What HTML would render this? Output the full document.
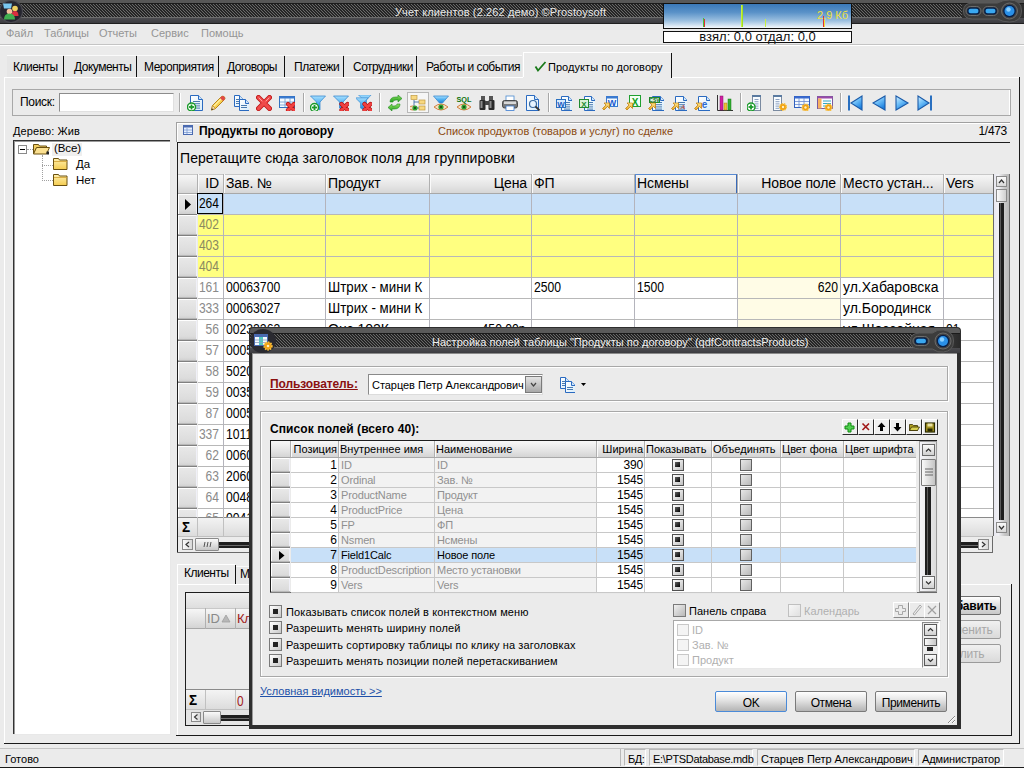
<!DOCTYPE html><html><head><meta charset='utf-8'><style>
html,body{margin:0;padding:0;width:1024px;height:768px;overflow:hidden;background:#ebebeb;font-family:"Liberation Sans",sans-serif;}
.a{position:absolute;white-space:nowrap;}
svg{position:absolute;}
</style></head><body>
<div class=a style='left:0px;top:0px;width:1024px;height:3px;background:#585858'></div>
<div class=a style='left:0px;top:3px;width:1024px;height:1px;background:#1c1c1c'></div>
<svg width='0' height='0' style='position:absolute'><defs><pattern id='stp' width='3' height='3' patternUnits='userSpaceOnUse'><rect width='3' height='3' fill='#262626'/><rect x='0' y='0' width='1' height='1' fill='#6a6a6a'/><rect x='1' y='1' width='1' height='1' fill='#6a6a6a'/><rect x='2' y='2' width='1' height='1' fill='#6a6a6a'/></pattern></defs></svg>
<svg style='left:0px;top:4px' width='1024' height='14' shape-rendering='crispEdges'><rect width='1024' height='14' fill='url(#stp)'/></svg>
<div class=a style='left:0px;top:17px;width:1024px;height:1px;background:#6e6e6e'></div>
<div class=a style='left:0px;top:18px;width:1024px;height:5px;background:linear-gradient(#4c4c50,#3c3c40)'></div>
<div class=a style='left:0px;top:23px;width:1024px;height:1px;background:#202020'></div>
<svg style='left:0;top:0' width='26' height='24' viewBox='0 0 26 24'>
<ellipse cx='11' cy='11.5' rx='11.5' ry='11' fill='#262630' stroke='#4a4a50' stroke-width='1.2'/>
<path d='M3 3.5 h9 l-1 5 h-7z' fill='#7ac8f0'/>
<circle cx='15' cy='8.5' r='2.8' fill='#f0d060'/><path d='M11.5 16 q0 -5 3.5 -5 q3.5 0 3.5 5z' fill='#d83040'/>
<circle cx='9.5' cy='11.5' r='2.8' fill='#f8c0a0'/><path d='M4 19.5 q0 -6 5.5 -6 q5.5 0 5.5 6z' fill='#40b050'/>
</svg>
<div class=a style='left:395px;top:6.69px;font-size:11px;line-height:11px;color:#e8e8e8;letter-spacing:0.12px;'>Учет клиентов (2.262 демо) ©Prostoysoft</div>
<div class=a style='left:962px;top:4px;width:62px;height:14px;background:#2e2e2e'></div>
<svg style='left:962px;top:0px' width='62' height='24' viewBox='0 0 62 24'>
<path d='M1.5 11 q0 -8 9 -8 h25 q5 -3 12 -3 q12 0 12 11 q0 11 -12 11 q-7 0 -12 -3 h-25 q-9 0 -9 -8z' fill='#3c3c3c' stroke='#5a5a5a' stroke-width='1'/>
<rect x='4' y='6.5' width='15' height='9' rx='4.5' fill='#3a3a3a' stroke='#7a7a7a' stroke-width='.8'/>
<rect x='5.2' y='7.5' width='12.6' height='7' rx='3.5' fill='#06204a'/><rect x='6.5' y='8.8' width='10' height='4.4' rx='2.2' fill='#3aa8f0'/>
<rect x='21' y='6.5' width='15' height='9' rx='4.5' fill='#3a3a3a' stroke='#7a7a7a' stroke-width='.8'/>
<rect x='22.2' y='7.5' width='12.6' height='7' rx='3.5' fill='#06204a'/><rect x='23.5' y='8.8' width='10' height='4.4' rx='2.2' fill='#3aa8f0'/>
<circle cx='47.5' cy='11' r='8' fill='#444' stroke='#6a6a6a' stroke-width='1'/>
<circle cx='47.5' cy='11' r='6.3' fill='#06204a'/><circle cx='47.5' cy='11' r='5' fill='#2a90e8'/><circle cx='46.5' cy='9.5' r='2.2' fill='#8ad0ff'/>
</svg>
<div class=a style='left:0px;top:24px;width:1024px;height:20px;background:#ebebeb'></div>
<div class=a style='left:6px;top:27.69px;font-size:11px;line-height:11px;color:#959595;'>Файл</div>
<div class=a style='left:44px;top:27.69px;font-size:11px;line-height:11px;color:#959595;'>Таблицы</div>
<div class=a style='left:99px;top:27.69px;font-size:11px;line-height:11px;color:#959595;'>Отчеты</div>
<div class=a style='left:151px;top:27.69px;font-size:11px;line-height:11px;color:#959595;'>Сервис</div>
<div class=a style='left:201px;top:27.69px;font-size:11px;line-height:11px;color:#959595;'>Помощь</div>
<div class=a style='left:0px;top:44px;width:1024px;height:1px;background:#c4c4c4'></div>
<div class=a style='left:0px;top:45px;width:1024px;height:1px;background:#ffffff'></div>
<div class=a style='left:663px;top:3px;width:189px;height:26px;background:linear-gradient(#3a78b8,#5a92c8 35%,#9cc0e0 70%,#f4f8fc);border:1px solid #111;box-sizing:border-box'></div>
<div class=a style='left:741px;top:5px;width:1px;height:22px;background:#c8f040'></div>
<div class=a style='left:742px;top:5px;width:1px;height:22px;background:#a0e020'></div>
<div class=a style='left:703px;top:18px;width:1px;height:9px;background:#40c040'></div>
<div class=a style='left:704px;top:19px;width:1px;height:8px;background:#e03030'></div>
<div class=a style='left:765px;top:19px;width:1px;height:8px;background:#c8f040'></div>
<div class=a style='left:823px;top:16px;width:1px;height:11px;background:#e03030'></div>
<div class=a style='left:824px;top:20px;width:1px;height:7px;background:#f0e040'></div>
<div class=a style='left:817px;top:9.69px;font-size:11px;line-height:11px;color:#f0e040;'>2,9 Кб</div>
<div class=a style='left:663px;top:31px;width:189px;height:12px;background:#fff;border:1px solid #111;box-sizing:border-box'></div>
<div class=a style='left:663px;width:189px;text-align:center;top:30.00px;font-size:13px;line-height:13px;color:#111;'>взял: 0,0 отдал: 0,0</div>
<div class=a style='left:4px;top:77px;width:1016px;height:667px;background:#ebebeb'></div>
<div class=a style='left:4px;top:77px;width:1016px;height:1px;background:#ffffff'></div>
<div class=a style='left:4px;top:77px;width:1px;height:666px;background:#ffffff'></div>
<div class=a style='left:1019px;top:77px;width:1px;height:667px;background:#1a1a1a'></div>
<div class=a style='left:4px;top:743px;width:1016px;height:1px;background:#1a1a1a'></div>
<div class=a style='left:7px;top:55px;width:56px;height:22px;background:#e6e6e6'></div>
<div class=a style='left:7px;top:55px;width:56px;height:1px;background:#fafafa'></div>
<div class=a style='left:63px;top:56px;width:1px;height:21px;background:#111'></div>
<div class=a style='left:13px;top:60.84px;font-size:12px;line-height:12px;color:#000;letter-spacing:-0.5px;'>Клиенты</div>
<div class=a style='left:64px;top:55px;width:72px;height:22px;background:#e6e6e6'></div>
<div class=a style='left:64px;top:55px;width:72px;height:1px;background:#fafafa'></div>
<div class=a style='left:136px;top:56px;width:1px;height:21px;background:#111'></div>
<div class=a style='left:74px;top:60.84px;font-size:12px;line-height:12px;color:#000;letter-spacing:-0.5px;'>Документы</div>
<div class=a style='left:137px;top:55px;width:81px;height:22px;background:#e6e6e6'></div>
<div class=a style='left:137px;top:55px;width:81px;height:1px;background:#fafafa'></div>
<div class=a style='left:218px;top:56px;width:1px;height:21px;background:#111'></div>
<div class=a style='left:144px;top:60.84px;font-size:12px;line-height:12px;color:#000;letter-spacing:-0.5px;'>Мероприятия</div>
<div class=a style='left:219px;top:55px;width:65px;height:22px;background:#e6e6e6'></div>
<div class=a style='left:219px;top:55px;width:65px;height:1px;background:#fafafa'></div>
<div class=a style='left:284px;top:56px;width:1px;height:21px;background:#111'></div>
<div class=a style='left:227px;top:60.84px;font-size:12px;line-height:12px;color:#000;letter-spacing:-0.5px;'>Договоры</div>
<div class=a style='left:285px;top:55px;width:58px;height:22px;background:#e6e6e6'></div>
<div class=a style='left:285px;top:55px;width:58px;height:1px;background:#fafafa'></div>
<div class=a style='left:343px;top:56px;width:1px;height:21px;background:#111'></div>
<div class=a style='left:294px;top:60.84px;font-size:12px;line-height:12px;color:#000;letter-spacing:-0.5px;'>Платежи</div>
<div class=a style='left:344px;top:55px;width:72px;height:22px;background:#e6e6e6'></div>
<div class=a style='left:344px;top:55px;width:72px;height:1px;background:#fafafa'></div>
<div class=a style='left:416px;top:56px;width:1px;height:21px;background:#111'></div>
<div class=a style='left:353px;top:60.84px;font-size:12px;line-height:12px;color:#000;letter-spacing:-0.5px;'>Сотрудники</div>
<div class=a style='left:417px;top:55px;width:105px;height:22px;background:#e6e6e6'></div>
<div class=a style='left:417px;top:55px;width:105px;height:1px;background:#fafafa'></div>
<div class=a style='left:426px;top:60.84px;font-size:12px;line-height:12px;color:#000;letter-spacing:-0.5px;'>Работы и события</div>
<div class=a style='left:523px;top:52px;width:148px;height:26px;background:#ebebeb'></div>
<div class=a style='left:523px;top:52px;width:148px;height:1px;background:#ffffff'></div>
<div class=a style='left:523px;top:52px;width:1px;height:25px;background:#ffffff'></div>
<div class=a style='left:671px;top:53px;width:1px;height:25px;background:#111'></div>
<svg style='left:534px;top:61px' width='13' height='11' viewBox='0 0 13 11'><path d='M1.5 5.5 L4 9.5 L11.5 1' stroke='#1a7a1a' stroke-width='1.8' fill='none'/></svg>
<div class=a style='left:548px;top:61.69px;font-size:11px;line-height:11px;color:#000;letter-spacing:0.05px;'>Продукты по договору</div>
<div class=a style='left:12px;top:89px;width:998px;height:27px;background:#ebebeb;border:1px solid #b4b4b4;border-right-color:#fff;border-bottom-color:#fff;box-sizing:border-box'></div>
<div class=a style='left:12px;top:89px;width:998px;height:1px;background:#a8a8a8'></div>
<div class=a style='left:12px;top:115px;width:998px;height:1px;background:#a8a8a8'></div>
<div class=a style='left:12px;top:89px;width:1px;height:27px;background:#a8a8a8'></div>
<div class=a style='left:1010px;top:89px;width:1px;height:27px;background:#a8a8a8'></div>
<div class=a style='left:20px;top:95.84px;font-size:12px;line-height:12px;color:#000;letter-spacing:-0.3px;'>Поиск:</div>
<div class=a style='left:59px;top:93px;width:115px;height:19px;background:#fff;border:1px solid #8c8c8c;border-right-color:#e0e0e0;border-bottom-color:#e0e0e0;box-sizing:border-box'></div>
<div class=a style='left:179px;top:93px;width:1px;height:19px;background:#a8a8a8'></div>
<div class=a style='left:180px;top:93px;width:1px;height:19px;background:#ffffff'></div>
<div class=a style='left:303px;top:93px;width:1px;height:19px;background:#a8a8a8'></div>
<div class=a style='left:304px;top:93px;width:1px;height:19px;background:#ffffff'></div>
<div class=a style='left:379px;top:93px;width:1px;height:19px;background:#a8a8a8'></div>
<div class=a style='left:380px;top:93px;width:1px;height:19px;background:#ffffff'></div>
<div class=a style='left:548px;top:93px;width:1px;height:19px;background:#a8a8a8'></div>
<div class=a style='left:549px;top:93px;width:1px;height:19px;background:#ffffff'></div>
<div class=a style='left:740px;top:93px;width:1px;height:19px;background:#a8a8a8'></div>
<div class=a style='left:741px;top:93px;width:1px;height:19px;background:#ffffff'></div>
<div class=a style='left:840px;top:93px;width:1px;height:19px;background:#a8a8a8'></div>
<div class=a style='left:841px;top:93px;width:1px;height:19px;background:#ffffff'></div>
<div class=a style='left:407px;top:92px;width:22px;height:21px;background:#f6f6f6;border:1px solid #b8b8b8;box-sizing:border-box'></div>
<svg width='0' height='0' style='position:absolute'><defs>
<linearGradient id='gBlue' x1='0' y1='0' x2='0' y2='1'><stop offset='0' stop-color='#a8e0ff'/><stop offset='.5' stop-color='#50b0f0'/><stop offset='1' stop-color='#1a80d8'/></linearGradient>
<linearGradient id='gBlueH' x1='0' y1='0' x2='.6' y2='1'><stop offset='0' stop-color='#d8f0ff'/><stop offset='.5' stop-color='#70c0f8'/><stop offset='1' stop-color='#1a80e0'/></linearGradient>
<linearGradient id='gRed' x1='0' y1='0' x2='0' y2='1'><stop offset='0' stop-color='#ff8080'/><stop offset='1' stop-color='#d01010'/></linearGradient>
<linearGradient id='gGreen' x1='0' y1='0' x2='0' y2='1'><stop offset='0' stop-color='#90e060'/><stop offset='1' stop-color='#20a020'/></linearGradient>
<linearGradient id='gYel' x1='0' y1='0' x2='0' y2='1'><stop offset='0' stop-color='#ffe890'/><stop offset='1' stop-color='#e0a020'/></linearGradient>
<linearGradient id='gDoc' x1='0' y1='0' x2='1' y2='1'><stop offset='0' stop-color='#ffffff'/><stop offset='1' stop-color='#d8ecfa'/></linearGradient>
</defs></svg>
<svg style='left:187px;top:95px' width='16' height='16' viewBox='0 0 16 16'><path d='M3.5 0.5 h8 l4 4 v11 h-12 z' fill='url(#gDoc)' stroke='#2a6ac0'/><path d='M11.5 0.5 v4 h4' fill='#cfe6fa' stroke='#2a6ac0'/><rect x='6' y='6.0' width='7' height='1' fill='#4a7ab0'/><rect x='6' y='8.2' width='7' height='1' fill='#4a7ab0'/><rect x='6' y='10.4' width='7' height='1' fill='#4a7ab0'/><rect x='6' y='12.6' width='7' height='1' fill='#4a7ab0'/><circle cx='4.5' cy='12' r='4' fill='#fff' stroke='#1a9a2a' stroke-width='1.5'/><rect x='2.0' y='11.1' width='5' height='1.8' fill='#1a9a2a'/><rect x='3.6' y='9.5' width='1.8' height='5' fill='#1a9a2a'/></svg>
<svg style='left:210px;top:95px' width='16' height='16' viewBox='0 0 16 16'><path d='M1.5 15 L2.5 10.5 L11.5 1.5 Q13 0.5 14.5 2 Q15.5 3.5 14.5 4.5 L5.5 13.5 z' fill='#f8d050' stroke='#b07a10' stroke-width='.9'/><path d='M4 11 L12.5 2.5' stroke='#fff0a0' stroke-width='1.2'/><path d='M11.5 1.5 Q13 0.5 14.5 2 Q15.5 3.5 14.5 4.5 L13 6 L10 3z' fill='#e04848'/><path d='M1.5 15 L2.5 10.5 L5.5 13.5z' fill='#f4dcb0' stroke='#b07a10' stroke-width='.6'/><path d='M1.3 15.2 l.6 -2 l1.4 1.4z' fill='#333'/></svg>
<svg style='left:233px;top:95px' width='16' height='16' viewBox='0 0 16 16'><path d='M1.5 0.5 h5 l4 4 v7 h-9 z' fill='url(#gDoc)' stroke='#2a6ac0'/><path d='M6.5 0.5 v4 h4' fill='#cfe6fa' stroke='#2a6ac0'/><rect x='3' y='4' width='4' height='1' fill='#4a7ab0'/><rect x='3' y='6' width='4' height='1' fill='#4a7ab0'/><rect x='3' y='8' width='4' height='1' fill='#4a7ab0'/><path d='M6.5 4.5 h6 l4 4 v7 h-10 z' fill='url(#gDoc)' stroke='#2a6ac0'/><path d='M12.5 4.5 v4 h4' fill='#cfe6fa' stroke='#2a6ac0'/><rect x='8' y='10' width='6' height='1' fill='#4a7ab0'/><rect x='8' y='12' width='6' height='1' fill='#4a7ab0'/></svg>
<svg style='left:256px;top:95px' width='16' height='16' viewBox='0 0 16 16'><path d='M2.5 2.5 L13.5 13.5 M13.5 2.5 L2.5 13.5' stroke='#c01818' stroke-width='5' stroke-linecap='round'/><path d='M2.5 2.5 L13.5 13.5 M13.5 2.5 L2.5 13.5' stroke='#f04a4a' stroke-width='3.2' stroke-linecap='round'/><path d='M3 3 L6 6 M13 3 L10 6' stroke='#ffa0a0' stroke-width='1' stroke-linecap='round'/></svg>
<svg style='left:279px;top:95px' width='16' height='16' viewBox='0 0 16 16'><rect x='.5' y='1.5' width='15' height='11' fill='#f4faff' stroke='#3070c0'/><rect x='.5' y='1.5' width='15' height='2' fill='#3a7ad0'/><path d='M1 7 h14 M1 10 h14 M6 3 v9 M11 3 v9' stroke='#6a9ad0' stroke-width='.8'/><path d='M9 9 L15 15 M15 9 L9 15' stroke='#b01010' stroke-width='4.2' stroke-linecap='round'/><path d='M9 9 L15 15 M15 9 L9 15' stroke='#f04040' stroke-width='3' stroke-linecap='round'/></svg>
<svg style='left:310px;top:95px' width='16' height='16' viewBox='0 0 16 16'><path d='M0.5 1 h15 l-5.5 6 v8 l-3.5 -2 v-6 z' fill='url(#gBlue)' stroke='#3a8ad0' stroke-width='.8'/><circle cx='4.5' cy='12.5' r='4' fill='#fff' stroke='#1a9a2a' stroke-width='1.5'/><rect x='2.0' y='11.6' width='5' height='1.8' fill='#1a9a2a'/><rect x='3.6' y='10.0' width='1.8' height='5' fill='#1a9a2a'/></svg>
<svg style='left:333px;top:95px' width='16' height='16' viewBox='0 0 16 16'><path d='M0.5 1 h15 l-5.5 6 v8 l-3.5 -2 v-6 z' fill='url(#gBlue)' stroke='#3a8ad0' stroke-width='.8'/><path d='M8.5 9 L14.5 15 M14.5 9 L8.5 15' stroke='#b01010' stroke-width='4.2' stroke-linecap='round'/><path d='M8.5 9 L14.5 15 M14.5 9 L8.5 15' stroke='#f04040' stroke-width='3' stroke-linecap='round'/></svg>
<svg style='left:356px;top:95px' width='16' height='16' viewBox='0 0 16 16'><g transform='translate(2,-1) scale(.85)'><path d='M0.5 1 h15 l-5.5 6 v8 l-3.5 -2 v-6 z' fill='url(#gBlue)' stroke='#3a8ad0' stroke-width='.8'/></g><g transform='translate(-1,2) scale(.85)'><path d='M0.5 1 h15 l-5.5 6 v8 l-3.5 -2 v-6 z' fill='url(#gBlue)' stroke='#3a8ad0' stroke-width='.8'/></g><path d='M8.5 9 L14.5 15 M14.5 9 L8.5 15' stroke='#b01010' stroke-width='4.2' stroke-linecap='round'/><path d='M8.5 9 L14.5 15 M14.5 9 L8.5 15' stroke='#f04040' stroke-width='3' stroke-linecap='round'/></svg>
<svg style='left:387px;top:95px' width='16' height='16' viewBox='0 0 16 16'><path d='M3 7 Q3 2 9 2 L11 2 L11 0 L15 3.5 L11 7 L11 5 L9 5 Q6 5 6 7 z' fill='url(#gGreen)' stroke='#208a20' stroke-width='.6'/><path d='M13 9 Q13 14 7 14 L5 14 L5 16 L1 12.5 L5 9 L5 11 L7 11 Q10 11 10 9 z' fill='url(#gGreen)' stroke='#208a20' stroke-width='.6'/></svg>
<svg style='left:410px;top:95px' width='16' height='16' viewBox='0 0 16 16'><rect x='1' y='0.5' width='6' height='4' fill='#f8d880' stroke='#c09a40' stroke-width='.7'/><rect x='9' y='5' width='6' height='4' fill='#f8d880' stroke='#c09a40' stroke-width='.7'/><rect x='9' y='11' width='6' height='4' fill='#f8d880' stroke='#c09a40' stroke-width='.7'/><path d='M4 5 v8 h5 M4 7 h5' stroke='#3060a0' stroke-width='.8' fill='none'/><path d='M-2 13 q4.5 -4 9 0 q-4.5 4 -9 0z' fill='#f8e0c0' stroke='#d08040' stroke-width='1'/><circle cx='5' cy='13' r='2.6' fill='#30a030'/><circle cx='5' cy='13' r='1' fill='#104010'/></svg>
<svg style='left:433px;top:95px' width='16' height='16' viewBox='0 0 16 16'><path d='M.5 1 h15 l-6 7 h-3 z' fill='url(#gBlue)' stroke='#3a8ad0' stroke-width='.8'/><path d='M1 12 q7 -6 14 0 q-7 6 -14 0z' fill='#f8e0c0' stroke='#d08040' stroke-width='1'/><circle cx='8' cy='12' r='2.6' fill='#30a030'/><circle cx='8' cy='12' r='1' fill='#104010'/></svg>
<svg style='left:456px;top:95px' width='16' height='16' viewBox='0 0 16 16'><text x='8' y='7' font-family='Liberation Sans' font-weight='bold' font-size='8' fill='#0a700a' text-anchor='middle' textLength='15' lengthAdjust='spacingAndGlyphs'>SQL</text><path d='M1 12 q7 -6 14 0 q-7 6 -14 0z' fill='#f8e0c0' stroke='#d08040' stroke-width='1'/><circle cx='8' cy='12' r='2.6' fill='#30a030'/><circle cx='8' cy='12' r='1' fill='#104010'/></svg>
<svg style='left:479px;top:95px' width='16' height='16' viewBox='0 0 16 16'><rect x='2' y='1' width='4' height='4' fill='#555'/><rect x='10' y='1' width='4' height='4' fill='#555'/><rect x='0.5' y='5' width='6' height='10' rx='1' fill='#2a2a2a'/><rect x='9.5' y='5' width='6' height='10' rx='1' fill='#2a2a2a'/><rect x='6' y='6' width='4' height='4' fill='#444'/><rect x='1.5' y='6' width='2' height='7' fill='#8a8a8a'/><rect x='10.5' y='6' width='2' height='7' fill='#8a8a8a'/></svg>
<svg style='left:502px;top:95px' width='16' height='16' viewBox='0 0 16 16'><rect x='4' y='1' width='8' height='5' fill='#fff' stroke='#4a8ad0' stroke-width='.8'/><rect x='.5' y='5.5' width='15' height='7.5' rx='2' fill='#7a7a7a' stroke='#333' stroke-width='.8'/><rect x='2' y='6.5' width='12' height='2.5' fill='#d8d8d8'/><rect x='4' y='11' width='8' height='4.5' fill='#fff' stroke='#3a7ad0' stroke-width='.8'/></svg>
<svg style='left:525px;top:95px' width='16' height='16' viewBox='0 0 16 16'><path d='M1.5 0.5 h8 l4 4 v11 h-12 z' fill='url(#gDoc)' stroke='#2a6ac0'/><path d='M9.5 0.5 v4 h4' fill='#cfe6fa' stroke='#2a6ac0'/><circle cx='8' cy='9' r='3.5' fill='#e8f4ff' stroke='#3a6aa0' stroke-width='1.2'/><path d='M10.5 11.5 L14.5 15.5' stroke='#333' stroke-width='1.8'/></svg>
<svg style='left:556px;top:95px' width='16' height='16' viewBox='0 0 16 16'><path d='M5.5 1.5 h7 l4 4 v10 h-11 z' fill='url(#gDoc)' stroke='#2a6ac0'/><path d='M12.5 1.5 v4 h4' fill='#cfe6fa' stroke='#2a6ac0'/><rect x='8' y='7.0' width='6' height='1' fill='#4a7ab0'/><rect x='8' y='9.2' width='6' height='1' fill='#4a7ab0'/><rect x='8' y='11.4' width='6' height='1' fill='#4a7ab0'/><rect x='8' y='13.6' width='6' height='1' fill='#4a7ab0'/><rect x='0.5' y='4.5' width='9' height='8' fill='#d8ecff' stroke='#2a70c0'/><text x='5' y='11.5' font-family='Liberation Sans' font-weight='bold' font-size='8' fill='#1a5ac0' text-anchor='middle'>W</text></svg>
<svg style='left:579px;top:95px' width='16' height='16' viewBox='0 0 16 16'><path d='M5.5 1.5 h7 l4 4 v10 h-11 z' fill='url(#gDoc)' stroke='#2a6ac0'/><path d='M12.5 1.5 v4 h4' fill='#cfe6fa' stroke='#2a6ac0'/><rect x='8' y='7.0' width='6' height='1' fill='#4a7ab0'/><rect x='8' y='9.2' width='6' height='1' fill='#4a7ab0'/><rect x='8' y='11.4' width='6' height='1' fill='#4a7ab0'/><rect x='8' y='13.6' width='6' height='1' fill='#4a7ab0'/><rect x='0.5' y='4.5' width='9' height='8' fill='#d8f0d8' stroke='#208a30'/><text x='5' y='11.5' font-family='Liberation Sans' font-weight='bold' font-size='8' fill='#208a30' text-anchor='middle'>X</text></svg>
<svg style='left:602px;top:95px' width='16' height='16' viewBox='0 0 16 16'><rect x='4.5' y='1.5' width='11' height='10' fill='#f4faff' stroke='#3a7ad0'/><rect x='4.5' y='1.5' width='11' height='2' fill='#3a7ad0'/><text x='10' y='10.5' font-family='Liberation Sans' font-weight='bold' font-size='9' fill='#1a5ad0' text-anchor='middle'>W</text><path d='M0.5 13.5 L4 10 L2 8 H7.5 V13.5 L5.5 11.5 L2 15 z' fill='url(#gYel)' stroke='#c07800' stroke-width='.7'/></svg>
<svg style='left:625px;top:95px' width='16' height='16' viewBox='0 0 16 16'><rect x='4.5' y='0.5' width='11' height='11' fill='#f4fff4' stroke='#20a030'/><text x='10' y='10.5' font-family='Liberation Sans' font-weight='bold' font-size='10' fill='#10a020' text-anchor='middle'>X</text><path d='M0.5 13.5 L4 10 L2 8 H7.5 V13.5 L5.5 11.5 L2 15 z' fill='url(#gYel)' stroke='#c07800' stroke-width='.7'/></svg>
<svg style='left:648px;top:95px' width='16' height='16' viewBox='0 0 16 16'><path d='M4.5 1.5 h8 l4 4 v10 h-12 z' fill='url(#gDoc)' stroke='#2a6ac0'/><path d='M12.5 1.5 v4 h4' fill='#cfe6fa' stroke='#2a6ac0'/><rect x='7' y='7.0' width='7' height='1' fill='#4a7ab0'/><rect x='7' y='9.2' width='7' height='1' fill='#4a7ab0'/><rect x='7' y='11.4' width='7' height='1' fill='#4a7ab0'/><rect x='7' y='13.6' width='7' height='1' fill='#4a7ab0'/><rect x='1.5' y='2.5' width='10' height='5' fill='#e0f4e0' stroke='#208a30'/><text x='6.5' y='7' font-family='Liberation Sans' font-weight='bold' font-size='5' fill='#106a20' text-anchor='middle'>CSV</text><path d='M0.5 13.5 L4 10 L2 8 H7.5 V13.5 L5.5 11.5 L2 15 z' fill='url(#gYel)' stroke='#c07800' stroke-width='.7'/></svg>
<svg style='left:671px;top:95px' width='16' height='16' viewBox='0 0 16 16'><path d='M4.5 1.5 h8 l4 4 v10 h-12 z' fill='url(#gDoc)' stroke='#2a6ac0'/><path d='M12.5 1.5 v4 h4' fill='#cfe6fa' stroke='#2a6ac0'/><rect x='7' y='7.0' width='7' height='1' fill='#4a7ab0'/><rect x='7' y='9.2' width='7' height='1' fill='#4a7ab0'/><rect x='7' y='11.4' width='7' height='1' fill='#4a7ab0'/><rect x='7' y='13.6' width='7' height='1' fill='#4a7ab0'/><text x='12' y='14' font-family='Liberation Serif' font-style='italic' font-size='7' fill='#c03020' text-anchor='middle'>A</text><path d='M0.5 13.5 L4 10 L2 8 H7.5 V13.5 L5.5 11.5 L2 15 z' fill='url(#gYel)' stroke='#c07800' stroke-width='.7'/></svg>
<svg style='left:694px;top:95px' width='16' height='16' viewBox='0 0 16 16'><path d='M4.5 1.5 h8 l4 4 v10 h-12 z' fill='url(#gDoc)' stroke='#2a6ac0'/><path d='M12.5 1.5 v4 h4' fill='#cfe6fa' stroke='#2a6ac0'/><text x='10.5' y='13' font-family='Liberation Sans' font-weight='bold' font-size='10' fill='#2a6ad0' text-anchor='middle'>e</text><path d='M0.5 13.5 L4 10 L2 8 H7.5 V13.5 L5.5 11.5 L2 15 z' fill='url(#gYel)' stroke='#c07800' stroke-width='.7'/></svg>
<svg style='left:717px;top:95px' width='16' height='16' viewBox='0 0 16 16'><path d='M.5 0 v15.5 h15.5' stroke='#333' stroke-width='1' fill='none'/><rect x='3' y='1' width='3' height='14' fill='#d020a0' stroke='#8a1070' stroke-width='.5'/><rect x='7' y='8' width='3' height='7' fill='#f0c030' stroke='#a08020' stroke-width='.5'/><rect x='11' y='4' width='3' height='11' fill='#30b030' stroke='#1a7a1a' stroke-width='.5'/></svg>
<svg style='left:747px;top:95px' width='16' height='16' viewBox='0 0 16 16'><rect x='5.5' y='.5' width='8' height='15' fill='#f8fcff' stroke='#7a8aa0'/><rect x='5' y='0' width='9' height='2' fill='#5a7aa0'/><rect x='7.5' y='4.0' width='4' height='1' fill='#8aa0c0'/><rect x='7.5' y='6.2' width='4' height='1' fill='#8aa0c0'/><rect x='7.5' y='8.4' width='4' height='1' fill='#8aa0c0'/><rect x='7.5' y='10.6' width='4' height='1' fill='#8aa0c0'/><rect x='7.5' y='12.8' width='4' height='1' fill='#8aa0c0'/><circle cx='4' cy='12' r='4' fill='#fff' stroke='#1a9a2a' stroke-width='1.5'/><rect x='1.5' y='11.1' width='5' height='1.8' fill='#1a9a2a'/><rect x='3.1' y='9.5' width='1.8' height='5' fill='#1a9a2a'/></svg>
<svg style='left:771px;top:95px' width='16' height='16' viewBox='0 0 16 16'><rect x='2.5' y='.5' width='8' height='15' fill='#f8fcff' stroke='#7a8aa0'/><rect x='2' y='0' width='9' height='2' fill='#5a7aa0'/><rect x='4.5' y='4.0' width='4' height='1' fill='#8aa0c0'/><rect x='4.5' y='6.2' width='4' height='1' fill='#8aa0c0'/><rect x='4.5' y='8.4' width='4' height='1' fill='#8aa0c0'/><rect x='4.5' y='10.6' width='4' height='1' fill='#8aa0c0'/><rect x='4.5' y='12.8' width='4' height='1' fill='#8aa0c0'/><circle cx='12' cy='12' r='3.3' fill='#f0a010' stroke='#f8c040' stroke-width='1.6' stroke-dasharray='1.3 1'/><circle cx='12' cy='12' r='1.2' fill='#fff0c0'/></svg>
<svg style='left:794px;top:95px' width='16' height='16' viewBox='0 0 16 16'><rect x='.5' y='1.5' width='15' height='11' fill='#f4faff' stroke='#3060c0'/><rect x='.5' y='1.5' width='15' height='2' fill='#3a6ad0'/><path d='M1 6.5 h14 M1 9.5 h14 M5 3 v9 M10 3 v9' stroke='#6a8ad0' stroke-width='.8'/><circle cx='11.5' cy='12.5' r='3.3' fill='#f0a010' stroke='#f8c040' stroke-width='1.6' stroke-dasharray='1.3 1'/><circle cx='11.5' cy='12.5' r='1.2' fill='#fff0c0'/></svg>
<svg style='left:817px;top:95px' width='16' height='16' viewBox='0 0 16 16'><rect x='.5' y='1.5' width='15' height='12' fill='#fcfcff' stroke='#7a5aa0'/><rect x='.5' y='1.5' width='15' height='2' fill='#9a4aa8'/><rect x='1' y='3.5' width='3.5' height='10' fill='#f8b060'/><path d='M6 6 h8 M6 8.5 h8 M6 11 h8' stroke='#30a8c8' stroke-width='1.2'/><circle cx='11.5' cy='12.5' r='3.3' fill='#f0a010' stroke='#f8c040' stroke-width='1.6' stroke-dasharray='1.3 1'/><circle cx='11.5' cy='12.5' r='1.2' fill='#fff0c0'/></svg>
<svg style='left:847px;top:95px' width='16' height='16' viewBox='0 0 16 16'><rect x='1' y='.5' width='2' height='15' fill='#2a70c0'/><path d='M4 8 L15 1 V15 z' fill='url(#gBlueH)' stroke='#1a5aa8' stroke-width='1.1'/></svg>
<svg style='left:872px;top:95px' width='16' height='16' viewBox='0 0 16 16'><path d='M1 8 L13 1 V15 z' fill='url(#gBlueH)' stroke='#1a5aa8' stroke-width='1.1'/></svg>
<svg style='left:894px;top:95px' width='16' height='16' viewBox='0 0 16 16'><path d='M14 8 L2 1 V15 z' fill='url(#gBlueH)' stroke='#1a5aa8' stroke-width='1.1'/></svg>
<svg style='left:917px;top:95px' width='16' height='16' viewBox='0 0 16 16'><rect x='13' y='.5' width='2' height='15' fill='#2a70c0'/><path d='M12 8 L1 1 V15 z' fill='url(#gBlueH)' stroke='#1a5aa8' stroke-width='1.1'/></svg>
<div class=a style='left:0px;top:748px;width:1024px;height:1px;background:#c4c4c4'></div>
<div class=a style='left:0px;top:749px;width:1024px;height:18px;background:#ebebeb'></div>
<div class=a style='left:0px;top:767px;width:1024px;height:1px;background:#1a1a1a'></div>
<div class=a style='left:5px;top:753.69px;font-size:11px;line-height:11px;color:#000;letter-spacing:0px;'>Готово</div>
<div class=a style='left:624px;top:749px;width:22px;height:17px;background:#ebebeb;border:1px solid #fff;border-left-color:#b8b8b8;border-top-color:#b8b8b8;box-sizing:border-box'></div>
<div class=a style='left:628px;top:753.69px;font-size:11px;line-height:11px;color:#000;letter-spacing:-0.5px;'>БД:</div>
<div class=a style='left:649px;top:749px;width:104px;height:17px;background:#ebebeb;border:1px solid #fff;border-left-color:#b8b8b8;border-top-color:#b8b8b8;box-sizing:border-box'></div>
<div class=a style='left:653px;top:753.69px;font-size:11px;line-height:11px;color:#000;letter-spacing:-0.33px;'>E:\PTSDatabase.mdb</div>
<div class=a style='left:757px;top:749px;width:158px;height:17px;background:#ebebeb;border:1px solid #fff;border-left-color:#b8b8b8;border-top-color:#b8b8b8;box-sizing:border-box'></div>
<div class=a style='left:761px;top:753.69px;font-size:11px;line-height:11px;color:#000;letter-spacing:-0.05px;'>Старцев Петр Александрович</div>
<div class=a style='left:918px;top:749px;width:86px;height:17px;background:#ebebeb;border:1px solid #fff;border-left-color:#b8b8b8;border-top-color:#b8b8b8;box-sizing:border-box'></div>
<div class=a style='left:922px;top:753.69px;font-size:11px;line-height:11px;color:#000;letter-spacing:-0.1px;'>Администратор</div>
<div class=a style='left:620px;top:749px;width:1px;height:17px;background:#b8b8b8'></div>
<div class=a style='left:13px;top:125.69px;font-size:11px;line-height:11px;color:#000;letter-spacing:0.1px;'>Дерево: Жив</div>
<div class=a style='left:13px;top:140px;width:158px;height:595px;background:#fff'></div>
<div class=a style='left:13px;top:140px;width:158px;height:1px;background:#333'></div>
<div class=a style='left:13px;top:140px;width:1px;height:595px;background:#333'></div>
<div class=a style='left:14px;top:141px;width:1px;height:593px;background:#9a9a9a'></div>
<div class=a style='left:14px;top:141px;width:156px;height:1px;background:#9a9a9a'></div>
<div class=a style='left:13px;top:734px;width:158px;height:1px;background:#e8e8e8'></div>
<div class=a style='left:170px;top:140px;width:1px;height:595px;background:#e8e8e8'></div>
<div class=a style='left:18px;top:145px;width:9px;height:9px;background:#fff;border:1px solid #8a8a8a;box-sizing:border-box'></div>
<div class=a style='left:20px;top:149px;width:5px;height:1px;background:#000'></div>
<div class=a style='left:27px;top:149px;width:6px;height:1px;border-top:1px dotted #a0a0a0'></div>
<div class=a style='left:42px;top:155px;width:1px;height:26px;border-left:1px dotted #a0a0a0'></div>
<div class=a style='left:42px;top:165px;width:11px;height:1px;border-top:1px dotted #a0a0a0'></div>
<div class=a style='left:42px;top:180px;width:11px;height:1px;border-top:1px dotted #a0a0a0'></div>
<svg width='0' height='0' style='position:absolute'><defs><linearGradient id='gFold' x1='0' y1='0' x2='0' y2='1'><stop offset='0' stop-color='#fff0b0'/><stop offset='1' stop-color='#f4cc50'/></linearGradient></defs></svg>
<svg style='left:33px;top:142px' width='17' height='14' viewBox='0 0 17 14'><path d='M.5 2.5 h5 l1 1.5 h7 v2 h-10 l-3 6 z' fill='#f0cc60' stroke='#6a5010' stroke-width='1'/><path d='M.5 12 l3 -6.5 h13 l-3 6.5 z' fill='#fbe090' stroke='#6a5010' stroke-width='1'/><rect x='13.5' y='9.5' width='2.5' height='3' fill='#222'/></svg>
<svg style='left:53px;top:157px' width='16' height='14' viewBox='0 0 16 14'><path d='M.5 1.5 h5 l1 1.5 h7.5 v9.5 h-13.5 z' fill='url(#gFold)' stroke='#6a5010' stroke-width='1'/><path d='M1 4.5 h13' stroke='#d0a030' stroke-width='.8'/></svg>
<svg style='left:53px;top:173px' width='16' height='14' viewBox='0 0 16 14'><path d='M.5 1.5 h5 l1 1.5 h7.5 v9.5 h-13.5 z' fill='url(#gFold)' stroke='#6a5010' stroke-width='1'/><path d='M1 4.5 h13' stroke='#d0a030' stroke-width='.8'/></svg>
<div class=a style='left:52px;top:143px;width:30px;height:13px;background:#efefef'></div>
<div class=a style='left:54px;top:143.27px;font-size:11.5px;line-height:11.5px;color:#000;letter-spacing:-0.1px;'>(Все)</div>
<div class=a style='left:76px;top:159.27px;font-size:11.5px;line-height:11.5px;color:#000;letter-spacing:0px;'>Да</div>
<div class=a style='left:76px;top:175.27px;font-size:11.5px;line-height:11.5px;color:#000;letter-spacing:0px;'>Нет</div>
<div class=a style='left:176px;top:122px;width:834px;height:20px;background:#ebebeb'></div>
<div class=a style='left:176px;top:122px;width:834px;height:1px;background:#a0a0a0'></div>
<div class=a style='left:176px;top:122px;width:1px;height:20px;background:#a0a0a0'></div>
<div class=a style='left:177px;top:123px;width:833px;height:1px;background:#ffffff'></div>
<div class=a style='left:177px;top:123px;width:1px;height:19px;background:#ffffff'></div>
<svg style='left:183px;top:125px' width='10' height='10' viewBox='0 0 10 10'><rect x='.5' y='.5' width='9' height='9' fill='#e8f0ff' stroke='#4a6ab0'/><rect x='.5' y='.5' width='9' height='2' fill='#4a6ab0'/><path d='M1 5 h8 M1 7.5 h8 M4 3 v6' stroke='#7a9ad0' stroke-width='.8'/></svg>
<div class=a style='left:199px;top:124.84px;font-size:12px;line-height:12px;color:#000;font-weight:bold;letter-spacing:-0.1px;'>Продукты по договору</div>
<div class=a style='left:438px;top:125.69px;font-size:11px;line-height:11px;color:#8a4a10;'>Список продуктов (товаров и услуг) по сделке</div>
<div class=a style='left:947px;width:60px;text-align:right;top:124.84px;font-size:12px;line-height:12px;color:#000;letter-spacing:-0.3px;'>1/473</div>
<div class=a style='left:177px;top:142px;width:833px;height:411px;background:#ebebeb'></div>
<div class=a style='left:177px;top:142px;width:833px;height:1px;background:#1e1e1e'></div>
<div class=a style='left:177px;top:142px;width:1px;height:411px;background:#1e1e1e'></div>
<div class=a style='left:180px;top:151.15px;font-size:14px;line-height:14px;color:#000;letter-spacing:0.08px;'>Перетащите сюда заголовок поля для группировки</div>
<div class=a style='left:178px;top:174px;width:815px;height:20px;background:linear-gradient(#f8f8f8,#e4e4e4 60%,#d4d4d4)'></div>
<div class=a style='left:178px;top:174px;width:815px;height:1px;background:#c8c8c8'></div>
<div class=a style='left:178px;top:193px;width:815px;height:1px;background:#a8a8a8'></div>
<div class=a style='left:197px;top:174px;width:1px;height:19px;background:#b0b0b0'></div>
<div class=a style='left:198px;top:174px;width:1px;height:19px;background:#fafafa'></div>
<div class=a style='left:223px;top:174px;width:1px;height:19px;background:#b0b0b0'></div>
<div class=a style='left:224px;top:174px;width:1px;height:19px;background:#fafafa'></div>
<div class=a style='left:194px;width:25px;text-align:right;top:176.15px;font-size:14px;line-height:14px;color:#000;letter-spacing:-0.1px;'>ID</div>
<div class=a style='left:325px;top:174px;width:1px;height:19px;background:#b0b0b0'></div>
<div class=a style='left:326px;top:174px;width:1px;height:19px;background:#fafafa'></div>
<div class=a style='left:226px;top:176.15px;font-size:14px;line-height:14px;color:#000;letter-spacing:-0.1px;'>Зав. №</div>
<div class=a style='left:429px;top:174px;width:1px;height:19px;background:#b0b0b0'></div>
<div class=a style='left:430px;top:174px;width:1px;height:19px;background:#fafafa'></div>
<div class=a style='left:328px;top:176.15px;font-size:14px;line-height:14px;color:#000;letter-spacing:-0.1px;'>Продукт</div>
<div class=a style='left:531px;top:174px;width:1px;height:19px;background:#b0b0b0'></div>
<div class=a style='left:532px;top:174px;width:1px;height:19px;background:#fafafa'></div>
<div class=a style='left:426px;width:101px;text-align:right;top:176.15px;font-size:14px;line-height:14px;color:#000;letter-spacing:-0.1px;'>Цена</div>
<div class=a style='left:634px;top:174px;width:1px;height:19px;background:#b0b0b0'></div>
<div class=a style='left:635px;top:174px;width:1px;height:19px;background:#fafafa'></div>
<div class=a style='left:534px;top:176.15px;font-size:14px;line-height:14px;color:#000;letter-spacing:-0.1px;'>ФП</div>
<div class=a style='left:737px;top:174px;width:1px;height:19px;background:#b0b0b0'></div>
<div class=a style='left:738px;top:174px;width:1px;height:19px;background:#fafafa'></div>
<div class=a style='left:637px;top:176.15px;font-size:14px;line-height:14px;color:#000;letter-spacing:-0.1px;'>Нсмены</div>
<div class=a style='left:840px;top:174px;width:1px;height:19px;background:#b0b0b0'></div>
<div class=a style='left:841px;top:174px;width:1px;height:19px;background:#fafafa'></div>
<div class=a style='left:734px;width:102px;text-align:right;top:176.15px;font-size:14px;line-height:14px;color:#000;letter-spacing:-0.1px;'>Новое поле</div>
<div class=a style='left:943px;top:174px;width:1px;height:19px;background:#b0b0b0'></div>
<div class=a style='left:944px;top:174px;width:1px;height:19px;background:#fafafa'></div>
<div class=a style='left:843px;top:176.15px;font-size:14px;line-height:14px;color:#000;letter-spacing:-0.1px;'>Место устан...</div>
<div class=a style='left:993px;top:174px;width:1px;height:19px;background:#b0b0b0'></div>
<div class=a style='left:993px;top:174px;width:1px;height:19px;background:#fafafa'></div>
<div class=a style='left:946px;top:176.15px;font-size:14px;line-height:14px;color:#000;letter-spacing:-0.1px;'>Vers</div>
<div class=a style='left:635px;top:174px;width:102px;height:19px;border:1px solid #5a8ad0;border-bottom:none;border-right-color:#3a6ab8;box-sizing:border-box'></div>
<div class=a style='left:178px;top:194px;width:815px;height:323px;overflow:hidden'>
<div class=a style='left:0px;top:0px;width:19px;height:20px;background:linear-gradient(#e8e8e8,#dcdcdc 80%,#cfcfcf);border-top:1px solid #fff;border-left:1px solid #fff;border-right:1px solid #f0f0f8;box-sizing:border-box'></div>
<div class=a style='left:0px;top:19px;width:19px;height:1px;background:#b8b8b8'></div>
<div class=a style='left:0px;top:20px;width:19px;height:1px;background:#808080'></div>
<div class=a style='left:20px;top:0px;width:795px;height:20px;background:#c8e0f8'></div>
<div class=a style='left:20px;top:20px;width:795px;height:1px;background:#b8b8b8'></div>
<div class=a style='left:45px;top:0px;width:1px;height:21px;background:#b4b4bc'></div>
<div class=a style='left:147px;top:0px;width:1px;height:21px;background:#b4b4bc'></div>
<div class=a style='left:251px;top:0px;width:1px;height:21px;background:#b4b4bc'></div>
<div class=a style='left:353px;top:0px;width:1px;height:21px;background:#b4b4bc'></div>
<div class=a style='left:456px;top:0px;width:1px;height:21px;background:#b4b4bc'></div>
<div class=a style='left:559px;top:0px;width:1px;height:21px;background:#b4b4bc'></div>
<div class=a style='left:662px;top:0px;width:1px;height:21px;background:#b4b4bc'></div>
<div class=a style='left:765px;top:0px;width:1px;height:21px;background:#b4b4bc'></div>
<div class=a style='left:815px;top:0px;width:1px;height:21px;background:#b4b4bc'></div>
<div class=a style='left:11px;width:30px;text-align:right;top:2.15px;font-size:14px;line-height:14px;color:#000;transform:scaleX(0.86);transform-origin:100% 0;'>264</div>
<div class=a style='left:0px;top:0px;width:19px;height:20px;background:linear-gradient(#e8e8e8,#dcdcdc 80%,#cfcfcf);border-top:1px solid #fff;border-left:1px solid #fff;border-right:1px solid #f0f0f8;box-sizing:border-box'></div>
<svg style='left:7px;top:5px' width='7' height='11' viewBox='0 0 7 11'><path d='M0 0 L6 5.5 L0 11z' fill='#000'/></svg>
<div class=a style='left:0px;top:21px;width:19px;height:20px;background:linear-gradient(#e8e8e8,#dcdcdc 80%,#cfcfcf);border-top:1px solid #fff;border-left:1px solid #fff;border-right:1px solid #f0f0f8;box-sizing:border-box'></div>
<div class=a style='left:0px;top:40px;width:19px;height:1px;background:#b8b8b8'></div>
<div class=a style='left:0px;top:41px;width:19px;height:1px;background:#808080'></div>
<div class=a style='left:20px;top:21px;width:795px;height:20px;background:#ffff80'></div>
<div class=a style='left:20px;top:41px;width:795px;height:1px;background:#b8b8b8'></div>
<div class=a style='left:45px;top:21px;width:1px;height:21px;background:#b4b4bc'></div>
<div class=a style='left:147px;top:21px;width:1px;height:21px;background:#b4b4bc'></div>
<div class=a style='left:251px;top:21px;width:1px;height:21px;background:#b4b4bc'></div>
<div class=a style='left:353px;top:21px;width:1px;height:21px;background:#b4b4bc'></div>
<div class=a style='left:456px;top:21px;width:1px;height:21px;background:#b4b4bc'></div>
<div class=a style='left:559px;top:21px;width:1px;height:21px;background:#b4b4bc'></div>
<div class=a style='left:662px;top:21px;width:1px;height:21px;background:#b4b4bc'></div>
<div class=a style='left:765px;top:21px;width:1px;height:21px;background:#b4b4bc'></div>
<div class=a style='left:815px;top:21px;width:1px;height:21px;background:#b4b4bc'></div>
<div class=a style='left:11px;width:30px;text-align:right;top:23.15px;font-size:14px;line-height:14px;color:#8a8a60;transform:scaleX(0.86);transform-origin:100% 0;'>402</div>
<div class=a style='left:0px;top:42px;width:19px;height:20px;background:linear-gradient(#e8e8e8,#dcdcdc 80%,#cfcfcf);border-top:1px solid #fff;border-left:1px solid #fff;border-right:1px solid #f0f0f8;box-sizing:border-box'></div>
<div class=a style='left:0px;top:61px;width:19px;height:1px;background:#b8b8b8'></div>
<div class=a style='left:0px;top:62px;width:19px;height:1px;background:#808080'></div>
<div class=a style='left:20px;top:42px;width:795px;height:20px;background:#ffff80'></div>
<div class=a style='left:20px;top:62px;width:795px;height:1px;background:#b8b8b8'></div>
<div class=a style='left:45px;top:42px;width:1px;height:21px;background:#b4b4bc'></div>
<div class=a style='left:147px;top:42px;width:1px;height:21px;background:#b4b4bc'></div>
<div class=a style='left:251px;top:42px;width:1px;height:21px;background:#b4b4bc'></div>
<div class=a style='left:353px;top:42px;width:1px;height:21px;background:#b4b4bc'></div>
<div class=a style='left:456px;top:42px;width:1px;height:21px;background:#b4b4bc'></div>
<div class=a style='left:559px;top:42px;width:1px;height:21px;background:#b4b4bc'></div>
<div class=a style='left:662px;top:42px;width:1px;height:21px;background:#b4b4bc'></div>
<div class=a style='left:765px;top:42px;width:1px;height:21px;background:#b4b4bc'></div>
<div class=a style='left:815px;top:42px;width:1px;height:21px;background:#b4b4bc'></div>
<div class=a style='left:11px;width:30px;text-align:right;top:44.15px;font-size:14px;line-height:14px;color:#8a8a60;transform:scaleX(0.86);transform-origin:100% 0;'>403</div>
<div class=a style='left:0px;top:63px;width:19px;height:20px;background:linear-gradient(#e8e8e8,#dcdcdc 80%,#cfcfcf);border-top:1px solid #fff;border-left:1px solid #fff;border-right:1px solid #f0f0f8;box-sizing:border-box'></div>
<div class=a style='left:0px;top:82px;width:19px;height:1px;background:#b8b8b8'></div>
<div class=a style='left:0px;top:83px;width:19px;height:1px;background:#808080'></div>
<div class=a style='left:20px;top:63px;width:795px;height:20px;background:#ffff80'></div>
<div class=a style='left:20px;top:83px;width:795px;height:1px;background:#b8b8b8'></div>
<div class=a style='left:45px;top:63px;width:1px;height:21px;background:#b4b4bc'></div>
<div class=a style='left:147px;top:63px;width:1px;height:21px;background:#b4b4bc'></div>
<div class=a style='left:251px;top:63px;width:1px;height:21px;background:#b4b4bc'></div>
<div class=a style='left:353px;top:63px;width:1px;height:21px;background:#b4b4bc'></div>
<div class=a style='left:456px;top:63px;width:1px;height:21px;background:#b4b4bc'></div>
<div class=a style='left:559px;top:63px;width:1px;height:21px;background:#b4b4bc'></div>
<div class=a style='left:662px;top:63px;width:1px;height:21px;background:#b4b4bc'></div>
<div class=a style='left:765px;top:63px;width:1px;height:21px;background:#b4b4bc'></div>
<div class=a style='left:815px;top:63px;width:1px;height:21px;background:#b4b4bc'></div>
<div class=a style='left:11px;width:30px;text-align:right;top:65.15px;font-size:14px;line-height:14px;color:#8a8a60;transform:scaleX(0.86);transform-origin:100% 0;'>404</div>
<div class=a style='left:0px;top:84px;width:19px;height:20px;background:linear-gradient(#e8e8e8,#dcdcdc 80%,#cfcfcf);border-top:1px solid #fff;border-left:1px solid #fff;border-right:1px solid #f0f0f8;box-sizing:border-box'></div>
<div class=a style='left:0px;top:103px;width:19px;height:1px;background:#b8b8b8'></div>
<div class=a style='left:0px;top:104px;width:19px;height:1px;background:#808080'></div>
<div class=a style='left:20px;top:84px;width:795px;height:20px;background:#ffffff'></div>
<div class=a style='left:560px;top:84px;width:102px;height:20px;background:#fffce6'></div>
<div class=a style='left:20px;top:104px;width:795px;height:1px;background:#b8b8b8'></div>
<div class=a style='left:45px;top:84px;width:1px;height:21px;background:#b4b4bc'></div>
<div class=a style='left:147px;top:84px;width:1px;height:21px;background:#b4b4bc'></div>
<div class=a style='left:251px;top:84px;width:1px;height:21px;background:#b4b4bc'></div>
<div class=a style='left:353px;top:84px;width:1px;height:21px;background:#b4b4bc'></div>
<div class=a style='left:456px;top:84px;width:1px;height:21px;background:#b4b4bc'></div>
<div class=a style='left:559px;top:84px;width:1px;height:21px;background:#b4b4bc'></div>
<div class=a style='left:662px;top:84px;width:1px;height:21px;background:#b4b4bc'></div>
<div class=a style='left:765px;top:84px;width:1px;height:21px;background:#b4b4bc'></div>
<div class=a style='left:815px;top:84px;width:1px;height:21px;background:#b4b4bc'></div>
<div class=a style='left:11px;width:30px;text-align:right;top:86.15px;font-size:14px;line-height:14px;color:#8a8a8a;transform:scaleX(0.86);transform-origin:100% 0;'>161</div>
<div class=a style='left:48px;top:86.15px;font-size:14px;line-height:14px;color:#000;transform:scaleX(0.87);transform-origin:0 0;'>00063700</div>
<div class=a style='left:150px;top:86.15px;font-size:14px;line-height:14px;color:#000;transform:scaleX(0.95);transform-origin:0 0;'>Штрих - мини К</div>
<div class=a style='left:356px;top:86.15px;font-size:14px;line-height:14px;color:#000;transform:scaleX(0.87);transform-origin:0 0;'>2500</div>
<div class=a style='left:459px;top:86.15px;font-size:14px;line-height:14px;color:#000;transform:scaleX(0.87);transform-origin:0 0;'>1500</div>
<div class=a style='left:558px;width:102px;text-align:right;top:86.15px;font-size:14px;line-height:14px;color:#000;transform:scaleX(0.87);transform-origin:100% 0;'>620</div>
<div class=a style='left:665px;top:86.15px;font-size:14px;line-height:14px;color:#000;'>ул.Хабаровска</div>
<div class=a style='left:0px;top:105px;width:19px;height:20px;background:linear-gradient(#e8e8e8,#dcdcdc 80%,#cfcfcf);border-top:1px solid #fff;border-left:1px solid #fff;border-right:1px solid #f0f0f8;box-sizing:border-box'></div>
<div class=a style='left:0px;top:124px;width:19px;height:1px;background:#b8b8b8'></div>
<div class=a style='left:0px;top:125px;width:19px;height:1px;background:#808080'></div>
<div class=a style='left:20px;top:105px;width:795px;height:20px;background:#ffffff'></div>
<div class=a style='left:560px;top:105px;width:102px;height:20px;background:#fffce6'></div>
<div class=a style='left:20px;top:125px;width:795px;height:1px;background:#b8b8b8'></div>
<div class=a style='left:45px;top:105px;width:1px;height:21px;background:#b4b4bc'></div>
<div class=a style='left:147px;top:105px;width:1px;height:21px;background:#b4b4bc'></div>
<div class=a style='left:251px;top:105px;width:1px;height:21px;background:#b4b4bc'></div>
<div class=a style='left:353px;top:105px;width:1px;height:21px;background:#b4b4bc'></div>
<div class=a style='left:456px;top:105px;width:1px;height:21px;background:#b4b4bc'></div>
<div class=a style='left:559px;top:105px;width:1px;height:21px;background:#b4b4bc'></div>
<div class=a style='left:662px;top:105px;width:1px;height:21px;background:#b4b4bc'></div>
<div class=a style='left:765px;top:105px;width:1px;height:21px;background:#b4b4bc'></div>
<div class=a style='left:815px;top:105px;width:1px;height:21px;background:#b4b4bc'></div>
<div class=a style='left:11px;width:30px;text-align:right;top:107.15px;font-size:14px;line-height:14px;color:#8a8a8a;transform:scaleX(0.86);transform-origin:100% 0;'>333</div>
<div class=a style='left:48px;top:107.15px;font-size:14px;line-height:14px;color:#000;transform:scaleX(0.87);transform-origin:0 0;'>00063027</div>
<div class=a style='left:150px;top:107.15px;font-size:14px;line-height:14px;color:#000;transform:scaleX(0.95);transform-origin:0 0;'>Штрих - мини К</div>
<div class=a style='left:665px;top:107.15px;font-size:14px;line-height:14px;color:#000;'>ул.Бородинск</div>
<div class=a style='left:0px;top:126px;width:19px;height:20px;background:linear-gradient(#e8e8e8,#dcdcdc 80%,#cfcfcf);border-top:1px solid #fff;border-left:1px solid #fff;border-right:1px solid #f0f0f8;box-sizing:border-box'></div>
<div class=a style='left:0px;top:145px;width:19px;height:1px;background:#b8b8b8'></div>
<div class=a style='left:0px;top:146px;width:19px;height:1px;background:#808080'></div>
<div class=a style='left:20px;top:126px;width:795px;height:20px;background:#ffffff'></div>
<div class=a style='left:560px;top:126px;width:102px;height:20px;background:#fffce6'></div>
<div class=a style='left:20px;top:146px;width:795px;height:1px;background:#b8b8b8'></div>
<div class=a style='left:45px;top:126px;width:1px;height:21px;background:#b4b4bc'></div>
<div class=a style='left:147px;top:126px;width:1px;height:21px;background:#b4b4bc'></div>
<div class=a style='left:251px;top:126px;width:1px;height:21px;background:#b4b4bc'></div>
<div class=a style='left:353px;top:126px;width:1px;height:21px;background:#b4b4bc'></div>
<div class=a style='left:456px;top:126px;width:1px;height:21px;background:#b4b4bc'></div>
<div class=a style='left:559px;top:126px;width:1px;height:21px;background:#b4b4bc'></div>
<div class=a style='left:662px;top:126px;width:1px;height:21px;background:#b4b4bc'></div>
<div class=a style='left:765px;top:126px;width:1px;height:21px;background:#b4b4bc'></div>
<div class=a style='left:815px;top:126px;width:1px;height:21px;background:#b4b4bc'></div>
<div class=a style='left:11px;width:30px;text-align:right;top:128.15px;font-size:14px;line-height:14px;color:#8a8a8a;transform:scaleX(0.86);transform-origin:100% 0;'>56</div>
<div class=a style='left:48px;top:128.15px;font-size:14px;line-height:14px;color:#000;transform:scaleX(0.87);transform-origin:0 0;'>00232263</div>
<div class=a style='left:150px;top:128.15px;font-size:14px;line-height:14px;color:#000;'>Онс 102К</div>
<div class=a style='left:250px;width:101px;text-align:right;top:128.15px;font-size:14px;line-height:14px;color:#000;transform:scaleX(0.87);transform-origin:100% 0;'>450,00р.</div>
<div class=a style='left:665px;top:128.15px;font-size:14px;line-height:14px;color:#000;'>ул.Шоссейная</div>
<div class=a style='left:768px;top:128.15px;font-size:14px;line-height:14px;color:#000;transform:scaleX(0.87);transform-origin:0 0;'>01</div>
<div class=a style='left:0px;top:147px;width:19px;height:20px;background:linear-gradient(#e8e8e8,#dcdcdc 80%,#cfcfcf);border-top:1px solid #fff;border-left:1px solid #fff;border-right:1px solid #f0f0f8;box-sizing:border-box'></div>
<div class=a style='left:0px;top:166px;width:19px;height:1px;background:#b8b8b8'></div>
<div class=a style='left:0px;top:167px;width:19px;height:1px;background:#808080'></div>
<div class=a style='left:20px;top:147px;width:795px;height:20px;background:#ffffff'></div>
<div class=a style='left:560px;top:147px;width:102px;height:20px;background:#fffce6'></div>
<div class=a style='left:20px;top:167px;width:795px;height:1px;background:#b8b8b8'></div>
<div class=a style='left:45px;top:147px;width:1px;height:21px;background:#b4b4bc'></div>
<div class=a style='left:147px;top:147px;width:1px;height:21px;background:#b4b4bc'></div>
<div class=a style='left:251px;top:147px;width:1px;height:21px;background:#b4b4bc'></div>
<div class=a style='left:353px;top:147px;width:1px;height:21px;background:#b4b4bc'></div>
<div class=a style='left:456px;top:147px;width:1px;height:21px;background:#b4b4bc'></div>
<div class=a style='left:559px;top:147px;width:1px;height:21px;background:#b4b4bc'></div>
<div class=a style='left:662px;top:147px;width:1px;height:21px;background:#b4b4bc'></div>
<div class=a style='left:765px;top:147px;width:1px;height:21px;background:#b4b4bc'></div>
<div class=a style='left:815px;top:147px;width:1px;height:21px;background:#b4b4bc'></div>
<div class=a style='left:11px;width:30px;text-align:right;top:149.15px;font-size:14px;line-height:14px;color:#8a8a8a;transform:scaleX(0.86);transform-origin:100% 0;'>57</div>
<div class=a style='left:48px;top:149.15px;font-size:14px;line-height:14px;color:#000;transform:scaleX(0.87);transform-origin:0 0;'>00056127</div>
<div class=a style='left:150px;top:149.15px;font-size:14px;line-height:14px;color:#000;transform:scaleX(0.95);transform-origin:0 0;'>Штрих - мини К</div>
<div class=a style='left:0px;top:168px;width:19px;height:20px;background:linear-gradient(#e8e8e8,#dcdcdc 80%,#cfcfcf);border-top:1px solid #fff;border-left:1px solid #fff;border-right:1px solid #f0f0f8;box-sizing:border-box'></div>
<div class=a style='left:0px;top:187px;width:19px;height:1px;background:#b8b8b8'></div>
<div class=a style='left:0px;top:188px;width:19px;height:1px;background:#808080'></div>
<div class=a style='left:20px;top:168px;width:795px;height:20px;background:#ffffff'></div>
<div class=a style='left:560px;top:168px;width:102px;height:20px;background:#fffce6'></div>
<div class=a style='left:20px;top:188px;width:795px;height:1px;background:#b8b8b8'></div>
<div class=a style='left:45px;top:168px;width:1px;height:21px;background:#b4b4bc'></div>
<div class=a style='left:147px;top:168px;width:1px;height:21px;background:#b4b4bc'></div>
<div class=a style='left:251px;top:168px;width:1px;height:21px;background:#b4b4bc'></div>
<div class=a style='left:353px;top:168px;width:1px;height:21px;background:#b4b4bc'></div>
<div class=a style='left:456px;top:168px;width:1px;height:21px;background:#b4b4bc'></div>
<div class=a style='left:559px;top:168px;width:1px;height:21px;background:#b4b4bc'></div>
<div class=a style='left:662px;top:168px;width:1px;height:21px;background:#b4b4bc'></div>
<div class=a style='left:765px;top:168px;width:1px;height:21px;background:#b4b4bc'></div>
<div class=a style='left:815px;top:168px;width:1px;height:21px;background:#b4b4bc'></div>
<div class=a style='left:11px;width:30px;text-align:right;top:170.15px;font-size:14px;line-height:14px;color:#8a8a8a;transform:scaleX(0.86);transform-origin:100% 0;'>58</div>
<div class=a style='left:48px;top:170.15px;font-size:14px;line-height:14px;color:#000;transform:scaleX(0.87);transform-origin:0 0;'>50200731</div>
<div class=a style='left:150px;top:170.15px;font-size:14px;line-height:14px;color:#000;transform:scaleX(0.95);transform-origin:0 0;'>Штрих - мини К</div>
<div class=a style='left:0px;top:189px;width:19px;height:20px;background:linear-gradient(#e8e8e8,#dcdcdc 80%,#cfcfcf);border-top:1px solid #fff;border-left:1px solid #fff;border-right:1px solid #f0f0f8;box-sizing:border-box'></div>
<div class=a style='left:0px;top:208px;width:19px;height:1px;background:#b8b8b8'></div>
<div class=a style='left:0px;top:209px;width:19px;height:1px;background:#808080'></div>
<div class=a style='left:20px;top:189px;width:795px;height:20px;background:#ffffff'></div>
<div class=a style='left:560px;top:189px;width:102px;height:20px;background:#fffce6'></div>
<div class=a style='left:20px;top:209px;width:795px;height:1px;background:#b8b8b8'></div>
<div class=a style='left:45px;top:189px;width:1px;height:21px;background:#b4b4bc'></div>
<div class=a style='left:147px;top:189px;width:1px;height:21px;background:#b4b4bc'></div>
<div class=a style='left:251px;top:189px;width:1px;height:21px;background:#b4b4bc'></div>
<div class=a style='left:353px;top:189px;width:1px;height:21px;background:#b4b4bc'></div>
<div class=a style='left:456px;top:189px;width:1px;height:21px;background:#b4b4bc'></div>
<div class=a style='left:559px;top:189px;width:1px;height:21px;background:#b4b4bc'></div>
<div class=a style='left:662px;top:189px;width:1px;height:21px;background:#b4b4bc'></div>
<div class=a style='left:765px;top:189px;width:1px;height:21px;background:#b4b4bc'></div>
<div class=a style='left:815px;top:189px;width:1px;height:21px;background:#b4b4bc'></div>
<div class=a style='left:11px;width:30px;text-align:right;top:191.15px;font-size:14px;line-height:14px;color:#8a8a8a;transform:scaleX(0.86);transform-origin:100% 0;'>59</div>
<div class=a style='left:48px;top:191.15px;font-size:14px;line-height:14px;color:#000;transform:scaleX(0.87);transform-origin:0 0;'>00356478</div>
<div class=a style='left:150px;top:191.15px;font-size:14px;line-height:14px;color:#000;transform:scaleX(0.95);transform-origin:0 0;'>Штрих - мини К</div>
<div class=a style='left:0px;top:210px;width:19px;height:20px;background:linear-gradient(#e8e8e8,#dcdcdc 80%,#cfcfcf);border-top:1px solid #fff;border-left:1px solid #fff;border-right:1px solid #f0f0f8;box-sizing:border-box'></div>
<div class=a style='left:0px;top:229px;width:19px;height:1px;background:#b8b8b8'></div>
<div class=a style='left:0px;top:230px;width:19px;height:1px;background:#808080'></div>
<div class=a style='left:20px;top:210px;width:795px;height:20px;background:#ffffff'></div>
<div class=a style='left:560px;top:210px;width:102px;height:20px;background:#fffce6'></div>
<div class=a style='left:20px;top:230px;width:795px;height:1px;background:#b8b8b8'></div>
<div class=a style='left:45px;top:210px;width:1px;height:21px;background:#b4b4bc'></div>
<div class=a style='left:147px;top:210px;width:1px;height:21px;background:#b4b4bc'></div>
<div class=a style='left:251px;top:210px;width:1px;height:21px;background:#b4b4bc'></div>
<div class=a style='left:353px;top:210px;width:1px;height:21px;background:#b4b4bc'></div>
<div class=a style='left:456px;top:210px;width:1px;height:21px;background:#b4b4bc'></div>
<div class=a style='left:559px;top:210px;width:1px;height:21px;background:#b4b4bc'></div>
<div class=a style='left:662px;top:210px;width:1px;height:21px;background:#b4b4bc'></div>
<div class=a style='left:765px;top:210px;width:1px;height:21px;background:#b4b4bc'></div>
<div class=a style='left:815px;top:210px;width:1px;height:21px;background:#b4b4bc'></div>
<div class=a style='left:11px;width:30px;text-align:right;top:212.15px;font-size:14px;line-height:14px;color:#8a8a8a;transform:scaleX(0.86);transform-origin:100% 0;'>87</div>
<div class=a style='left:48px;top:212.15px;font-size:14px;line-height:14px;color:#000;transform:scaleX(0.87);transform-origin:0 0;'>00056324</div>
<div class=a style='left:150px;top:212.15px;font-size:14px;line-height:14px;color:#000;transform:scaleX(0.95);transform-origin:0 0;'>Штрих - мини К</div>
<div class=a style='left:0px;top:231px;width:19px;height:20px;background:linear-gradient(#e8e8e8,#dcdcdc 80%,#cfcfcf);border-top:1px solid #fff;border-left:1px solid #fff;border-right:1px solid #f0f0f8;box-sizing:border-box'></div>
<div class=a style='left:0px;top:250px;width:19px;height:1px;background:#b8b8b8'></div>
<div class=a style='left:0px;top:251px;width:19px;height:1px;background:#808080'></div>
<div class=a style='left:20px;top:231px;width:795px;height:20px;background:#ffffff'></div>
<div class=a style='left:560px;top:231px;width:102px;height:20px;background:#fffce6'></div>
<div class=a style='left:20px;top:251px;width:795px;height:1px;background:#b8b8b8'></div>
<div class=a style='left:45px;top:231px;width:1px;height:21px;background:#b4b4bc'></div>
<div class=a style='left:147px;top:231px;width:1px;height:21px;background:#b4b4bc'></div>
<div class=a style='left:251px;top:231px;width:1px;height:21px;background:#b4b4bc'></div>
<div class=a style='left:353px;top:231px;width:1px;height:21px;background:#b4b4bc'></div>
<div class=a style='left:456px;top:231px;width:1px;height:21px;background:#b4b4bc'></div>
<div class=a style='left:559px;top:231px;width:1px;height:21px;background:#b4b4bc'></div>
<div class=a style='left:662px;top:231px;width:1px;height:21px;background:#b4b4bc'></div>
<div class=a style='left:765px;top:231px;width:1px;height:21px;background:#b4b4bc'></div>
<div class=a style='left:815px;top:231px;width:1px;height:21px;background:#b4b4bc'></div>
<div class=a style='left:11px;width:30px;text-align:right;top:233.15px;font-size:14px;line-height:14px;color:#8a8a8a;transform:scaleX(0.86);transform-origin:100% 0;'>337</div>
<div class=a style='left:48px;top:233.15px;font-size:14px;line-height:14px;color:#000;transform:scaleX(0.87);transform-origin:0 0;'>10114522</div>
<div class=a style='left:150px;top:233.15px;font-size:14px;line-height:14px;color:#000;transform:scaleX(0.95);transform-origin:0 0;'>Штрих - мини К</div>
<div class=a style='left:0px;top:252px;width:19px;height:20px;background:linear-gradient(#e8e8e8,#dcdcdc 80%,#cfcfcf);border-top:1px solid #fff;border-left:1px solid #fff;border-right:1px solid #f0f0f8;box-sizing:border-box'></div>
<div class=a style='left:0px;top:271px;width:19px;height:1px;background:#b8b8b8'></div>
<div class=a style='left:0px;top:272px;width:19px;height:1px;background:#808080'></div>
<div class=a style='left:20px;top:252px;width:795px;height:20px;background:#ffffff'></div>
<div class=a style='left:560px;top:252px;width:102px;height:20px;background:#fffce6'></div>
<div class=a style='left:20px;top:272px;width:795px;height:1px;background:#b8b8b8'></div>
<div class=a style='left:45px;top:252px;width:1px;height:21px;background:#b4b4bc'></div>
<div class=a style='left:147px;top:252px;width:1px;height:21px;background:#b4b4bc'></div>
<div class=a style='left:251px;top:252px;width:1px;height:21px;background:#b4b4bc'></div>
<div class=a style='left:353px;top:252px;width:1px;height:21px;background:#b4b4bc'></div>
<div class=a style='left:456px;top:252px;width:1px;height:21px;background:#b4b4bc'></div>
<div class=a style='left:559px;top:252px;width:1px;height:21px;background:#b4b4bc'></div>
<div class=a style='left:662px;top:252px;width:1px;height:21px;background:#b4b4bc'></div>
<div class=a style='left:765px;top:252px;width:1px;height:21px;background:#b4b4bc'></div>
<div class=a style='left:815px;top:252px;width:1px;height:21px;background:#b4b4bc'></div>
<div class=a style='left:11px;width:30px;text-align:right;top:254.15px;font-size:14px;line-height:14px;color:#8a8a8a;transform:scaleX(0.86);transform-origin:100% 0;'>62</div>
<div class=a style='left:48px;top:254.15px;font-size:14px;line-height:14px;color:#000;transform:scaleX(0.87);transform-origin:0 0;'>00601234</div>
<div class=a style='left:150px;top:254.15px;font-size:14px;line-height:14px;color:#000;transform:scaleX(0.95);transform-origin:0 0;'>Штрих - мини К</div>
<div class=a style='left:0px;top:273px;width:19px;height:20px;background:linear-gradient(#e8e8e8,#dcdcdc 80%,#cfcfcf);border-top:1px solid #fff;border-left:1px solid #fff;border-right:1px solid #f0f0f8;box-sizing:border-box'></div>
<div class=a style='left:0px;top:292px;width:19px;height:1px;background:#b8b8b8'></div>
<div class=a style='left:0px;top:293px;width:19px;height:1px;background:#808080'></div>
<div class=a style='left:20px;top:273px;width:795px;height:20px;background:#ffffff'></div>
<div class=a style='left:560px;top:273px;width:102px;height:20px;background:#fffce6'></div>
<div class=a style='left:20px;top:293px;width:795px;height:1px;background:#b8b8b8'></div>
<div class=a style='left:45px;top:273px;width:1px;height:21px;background:#b4b4bc'></div>
<div class=a style='left:147px;top:273px;width:1px;height:21px;background:#b4b4bc'></div>
<div class=a style='left:251px;top:273px;width:1px;height:21px;background:#b4b4bc'></div>
<div class=a style='left:353px;top:273px;width:1px;height:21px;background:#b4b4bc'></div>
<div class=a style='left:456px;top:273px;width:1px;height:21px;background:#b4b4bc'></div>
<div class=a style='left:559px;top:273px;width:1px;height:21px;background:#b4b4bc'></div>
<div class=a style='left:662px;top:273px;width:1px;height:21px;background:#b4b4bc'></div>
<div class=a style='left:765px;top:273px;width:1px;height:21px;background:#b4b4bc'></div>
<div class=a style='left:815px;top:273px;width:1px;height:21px;background:#b4b4bc'></div>
<div class=a style='left:11px;width:30px;text-align:right;top:275.15px;font-size:14px;line-height:14px;color:#8a8a8a;transform:scaleX(0.86);transform-origin:100% 0;'>63</div>
<div class=a style='left:48px;top:275.15px;font-size:14px;line-height:14px;color:#000;transform:scaleX(0.87);transform-origin:0 0;'>20601256</div>
<div class=a style='left:150px;top:275.15px;font-size:14px;line-height:14px;color:#000;transform:scaleX(0.95);transform-origin:0 0;'>Штрих - мини К</div>
<div class=a style='left:0px;top:294px;width:19px;height:20px;background:linear-gradient(#e8e8e8,#dcdcdc 80%,#cfcfcf);border-top:1px solid #fff;border-left:1px solid #fff;border-right:1px solid #f0f0f8;box-sizing:border-box'></div>
<div class=a style='left:0px;top:313px;width:19px;height:1px;background:#b8b8b8'></div>
<div class=a style='left:0px;top:314px;width:19px;height:1px;background:#808080'></div>
<div class=a style='left:20px;top:294px;width:795px;height:20px;background:#ffffff'></div>
<div class=a style='left:560px;top:294px;width:102px;height:20px;background:#fffce6'></div>
<div class=a style='left:20px;top:314px;width:795px;height:1px;background:#b8b8b8'></div>
<div class=a style='left:45px;top:294px;width:1px;height:21px;background:#b4b4bc'></div>
<div class=a style='left:147px;top:294px;width:1px;height:21px;background:#b4b4bc'></div>
<div class=a style='left:251px;top:294px;width:1px;height:21px;background:#b4b4bc'></div>
<div class=a style='left:353px;top:294px;width:1px;height:21px;background:#b4b4bc'></div>
<div class=a style='left:456px;top:294px;width:1px;height:21px;background:#b4b4bc'></div>
<div class=a style='left:559px;top:294px;width:1px;height:21px;background:#b4b4bc'></div>
<div class=a style='left:662px;top:294px;width:1px;height:21px;background:#b4b4bc'></div>
<div class=a style='left:765px;top:294px;width:1px;height:21px;background:#b4b4bc'></div>
<div class=a style='left:815px;top:294px;width:1px;height:21px;background:#b4b4bc'></div>
<div class=a style='left:11px;width:30px;text-align:right;top:296.15px;font-size:14px;line-height:14px;color:#8a8a8a;transform:scaleX(0.86);transform-origin:100% 0;'>64</div>
<div class=a style='left:48px;top:296.15px;font-size:14px;line-height:14px;color:#000;transform:scaleX(0.87);transform-origin:0 0;'>00482211</div>
<div class=a style='left:150px;top:296.15px;font-size:14px;line-height:14px;color:#000;transform:scaleX(0.95);transform-origin:0 0;'>Штрих - мини К</div>
<div class=a style='left:0px;top:315px;width:19px;height:20px;background:linear-gradient(#e8e8e8,#dcdcdc 80%,#cfcfcf);border-top:1px solid #fff;border-left:1px solid #fff;border-right:1px solid #f0f0f8;box-sizing:border-box'></div>
<div class=a style='left:0px;top:334px;width:19px;height:1px;background:#b8b8b8'></div>
<div class=a style='left:0px;top:335px;width:19px;height:1px;background:#808080'></div>
<div class=a style='left:20px;top:315px;width:795px;height:20px;background:#ffffff'></div>
<div class=a style='left:560px;top:315px;width:102px;height:20px;background:#fffce6'></div>
<div class=a style='left:20px;top:335px;width:795px;height:1px;background:#b8b8b8'></div>
<div class=a style='left:45px;top:315px;width:1px;height:21px;background:#b4b4bc'></div>
<div class=a style='left:147px;top:315px;width:1px;height:21px;background:#b4b4bc'></div>
<div class=a style='left:251px;top:315px;width:1px;height:21px;background:#b4b4bc'></div>
<div class=a style='left:353px;top:315px;width:1px;height:21px;background:#b4b4bc'></div>
<div class=a style='left:456px;top:315px;width:1px;height:21px;background:#b4b4bc'></div>
<div class=a style='left:559px;top:315px;width:1px;height:21px;background:#b4b4bc'></div>
<div class=a style='left:662px;top:315px;width:1px;height:21px;background:#b4b4bc'></div>
<div class=a style='left:765px;top:315px;width:1px;height:21px;background:#b4b4bc'></div>
<div class=a style='left:815px;top:315px;width:1px;height:21px;background:#b4b4bc'></div>
<div class=a style='left:11px;width:30px;text-align:right;top:317.15px;font-size:14px;line-height:14px;color:#8a8a8a;transform:scaleX(0.86);transform-origin:100% 0;'>65</div>
<div class=a style='left:48px;top:317.15px;font-size:14px;line-height:14px;color:#000;transform:scaleX(0.87);transform-origin:0 0;'>00412233</div>
<div class=a style='left:150px;top:317.15px;font-size:14px;line-height:14px;color:#000;transform:scaleX(0.95);transform-origin:0 0;'>Штрих - мини К</div>
</div>
<div class=a style='left:197px;top:193px;width:26px;height:21px;border:1px solid #000;box-sizing:border-box'></div>
<div class=a style='left:178px;top:517px;width:815px;height:19px;background:linear-gradient(#f4f4f4,#dcdcdc)'></div>
<div class=a style='left:178px;top:517px;width:815px;height:1px;background:#8a8a8a'></div>
<div class=a style='left:197px;top:517px;width:1px;height:19px;background:#c0c0c0'></div>
<div class=a style='left:223px;top:517px;width:1px;height:19px;background:#c0c0c0'></div>
<div class=a style='left:325px;top:517px;width:1px;height:19px;background:#c0c0c0'></div>
<div class=a style='left:429px;top:517px;width:1px;height:19px;background:#c0c0c0'></div>
<div class=a style='left:531px;top:517px;width:1px;height:19px;background:#c0c0c0'></div>
<div class=a style='left:634px;top:517px;width:1px;height:19px;background:#c0c0c0'></div>
<div class=a style='left:737px;top:517px;width:1px;height:19px;background:#c0c0c0'></div>
<div class=a style='left:840px;top:517px;width:1px;height:19px;background:#c0c0c0'></div>
<div class=a style='left:943px;top:517px;width:1px;height:19px;background:#c0c0c0'></div>
<div class=a style='left:182px;top:519.30px;font-size:15px;line-height:15px;color:#000;transform:scaleX(0.9);transform-origin:0 0;font-weight:bold;'>Σ</div>
<div class=a style='left:993px;top:174px;width:17px;height:362px;background:linear-gradient(90deg,#e8e8f0,#f0f0f4 30%,#c8c8c8 70%,#b8b8b8);border-left:1px solid #6a6a6a;border-right:1px solid #707070;box-sizing:border-box'></div>
<div class=a style='left:996px;top:176px;width:11px;height:11px;background:linear-gradient(#fafafa,#d8d8d8);border:1px solid #8a8a8a;box-sizing:border-box'></div>
<svg style='left:998px;top:178px' width='7' height='7' viewBox='0 0 7 7'><path d='M1 5 L3.5 2 L6 5' stroke='#333' stroke-width='1.2' fill='none'/></svg>
<div class=a style='left:996px;top:189px;width:11px;height:13px;background:linear-gradient(90deg,#fafafa,#d0d0d0);border:1px solid #8a8a8a;box-sizing:border-box'></div>
<div class=a style='left:999px;top:203px;width:5px;height:317px;background:#1e1e1e'></div>
<div class=a style='left:1000px;top:203px;width:1px;height:317px;background:#5a5a5a'></div>
<div class=a style='left:996px;top:522px;width:11px;height:11px;background:linear-gradient(#fafafa,#d8d8d8);border:1px solid #8a8a8a;box-sizing:border-box'></div>
<svg style='left:998px;top:524px' width='7' height='7' viewBox='0 0 7 7'><path d='M1 2 L3.5 5 L6 2' stroke='#333' stroke-width='1.2' fill='none'/></svg>
<div class=a style='left:178px;top:536px;width:815px;height:17px;background:#ececec;border-top:1px solid #c0c0c0;box-sizing:border-box'></div>
<div class=a style='left:177px;top:552px;width:816px;height:1px;background:#6a6a6a'></div>
<div class=a style='left:992px;top:536px;width:1px;height:17px;background:#6a6a6a'></div>
<div class=a style='left:182px;top:539px;width:11px;height:11px;background:linear-gradient(90deg,#fafafa,#d8d8d8);border:1px solid #8a8a8a;box-sizing:border-box'></div>
<svg style='left:184px;top:541px' width='7' height='7' viewBox='0 0 7 7'><path d='M5 1 L2 3.5 L5 6' stroke='#333' stroke-width='1.2' fill='none'/></svg>
<div class=a style='left:195px;top:538px;width:24px;height:13px;background:linear-gradient(#fafafa,#c8c8c8);border:1px solid #8a8a8a;border-radius:1px;box-sizing:border-box'></div>
<svg style='left:202px;top:541px' width='10' height='7' viewBox='0 0 10 7'><path d='M2 6 L3 1 M5 6 L6 1 M8 6 L9 1' stroke='#555' stroke-width='1'/></svg>
<div class=a style='left:219px;top:542px;width:759px;height:3px;background:#1e1e1e'></div>
<div class=a style='left:219px;top:545px;width:759px;height:1px;background:#6a6a6a'></div>
<div class=a style='left:219px;top:546px;width:759px;height:2px;background:#1e1e1e'></div>
<div class=a style='left:978px;top:539px;width:11px;height:11px;background:linear-gradient(90deg,#fafafa,#d8d8d8);border:1px solid #8a8a8a;box-sizing:border-box'></div>
<svg style='left:980px;top:541px' width='7' height='7' viewBox='0 0 7 7'><path d='M2 1 L5 3.5 L2 6' stroke='#333' stroke-width='1.2' fill='none'/></svg>
<div class=a style='left:177px;top:565px;width:58px;height:19px;background:#ebebeb'></div>
<div class=a style='left:177px;top:564px;width:58px;height:1px;background:#ffffff'></div>
<div class=a style='left:177px;top:564px;width:1px;height:20px;background:#ffffff'></div>
<div class=a style='left:235px;top:565px;width:1px;height:19px;background:#111'></div>
<div class=a style='left:184px;top:566.84px;font-size:12px;line-height:12px;color:#000;letter-spacing:-0.5px;'>Клиенты</div>
<div class=a style='left:236px;top:566px;width:40px;height:18px;background:#e6e6e6'></div>
<div class=a style='left:236px;top:566px;width:40px;height:1px;background:#fafafa'></div>
<div class=a style='left:240px;top:567.84px;font-size:12px;line-height:12px;color:#000;letter-spacing:-0.5px;'>Мероприятия</div>
<div class=a style='left:177px;top:584px;width:835px;height:1px;background:#ffffff'></div>
<div class=a style='left:177px;top:584px;width:1px;height:151px;background:#ffffff'></div>
<div class=a style='left:1011px;top:584px;width:1px;height:152px;background:#1a1a1a'></div>
<div class=a style='left:176px;top:735px;width:836px;height:1px;background:#1a1a1a'></div>
<div class=a style='left:185px;top:592px;width:770px;height:133px;background:#ebebeb'></div>
<div class=a style='left:185px;top:592px;width:770px;height:1px;background:#1e1e1e'></div>
<div class=a style='left:185px;top:592px;width:1px;height:133px;background:#1e1e1e'></div>
<div class=a style='left:186px;top:593px;width:769px;height:15px;background:linear-gradient(#f0f0f0,#dedede)'></div>
<div class=a style='left:186px;top:608px;width:769px;height:21px;background:linear-gradient(#f8f8f8,#e2e2e2 60%,#d2d2d2)'></div>
<div class=a style='left:186px;top:608px;width:769px;height:1px;background:#c8c8c8'></div>
<div class=a style='left:186px;top:628px;width:769px;height:1px;background:#a8a8a8'></div>
<div class=a style='left:205px;top:608px;width:1px;height:21px;background:#b0b0b0'></div>
<div class=a style='left:235px;top:608px;width:1px;height:21px;background:#b0b0b0'></div>
<div class=a style='left:207px;top:612.00px;font-size:13px;line-height:13px;color:#8a8a8a;letter-spacing:-0.2px;'>ID</div>
<svg style='left:221px;top:614px' width='10' height='9' viewBox='0 0 10 9'><path d='M1 8 L5 1 L9 8z' fill='#b8b8b8' stroke='#a0a0a0' stroke-width='.8'/></svg>
<div class=a style='left:237px;top:612.00px;font-size:13px;line-height:13px;color:#a02020;letter-spacing:-0.2px;'>Клиент</div>
<div class=a style='left:186px;top:690px;width:769px;height:19px;background:linear-gradient(#f4f4f4,#dcdcdc)'></div>
<div class=a style='left:186px;top:689px;width:769px;height:1px;background:#8a8a8a'></div>
<div class=a style='left:205px;top:690px;width:1px;height:19px;background:#c0c0c0'></div>
<div class=a style='left:235px;top:690px;width:1px;height:19px;background:#c0c0c0'></div>
<div class=a style='left:189px;top:692.30px;font-size:15px;line-height:15px;color:#000;transform:scaleX(0.9);transform-origin:0 0;font-weight:bold;'>Σ</div>
<div class=a style='left:237px;top:694.15px;font-size:14px;line-height:14px;color:#a02020;transform:scaleX(0.85);transform-origin:0 0;'>0</div>
<div class=a style='left:186px;top:709px;width:769px;height:16px;background:#e4e4e4;border-top:1px solid #c0c0c0;box-sizing:border-box'></div>
<div class=a style='left:185px;top:725px;width:770px;height:1px;background:#1e1e1e'></div>
<div class=a style='left:191px;top:712px;width:10px;height:10px;background:linear-gradient(90deg,#fafafa,#d8d8d8);border:1px solid #8a8a8a;box-sizing:border-box'></div>
<svg style='left:193px;top:714px' width='6' height='6' viewBox='0 0 6 6'><path d='M4.5 .5 L1.5 3 L4.5 5.5' stroke='#333' stroke-width='1.1' fill='none'/></svg>
<div class=a style='left:203px;top:711px;width:18px;height:13px;background:linear-gradient(#fafafa,#c8c8c8);border:1px solid #8a8a8a;border-radius:1px;box-sizing:border-box'></div>
<div class=a style='left:221px;top:715px;width:730px;height:3px;background:#1e1e1e'></div>
<div class=a style='left:221px;top:718px;width:730px;height:1px;background:#6a6a6a'></div>
<div class=a style='left:221px;top:719px;width:730px;height:2px;background:#1e1e1e'></div>
<div class=a style='left:930px;top:596px;width:71px;height:19px;background:linear-gradient(#ffffff,#e0e0e0 50%,#c8c8c8);border:1px solid #707070;border-radius:2px;box-sizing:border-box'></div>
<div class=a style='left:940px;top:599.84px;font-size:12px;line-height:12px;color:#000;font-weight:bold;letter-spacing:-0.2px;'>Добавить</div>
<div class=a style='left:930px;top:620px;width:71px;height:19px;background:linear-gradient(#f0f0f0,#dadada);border:1px solid #9a9a9a;border-radius:2px;box-sizing:border-box'></div>
<div class=a style='left:940px;top:623.84px;font-size:12px;line-height:12px;color:#a8a8a8;letter-spacing:-0.2px;'>Изменить</div>
<div class=a style='left:930px;top:644px;width:71px;height:19px;background:linear-gradient(#f0f0f0,#dadada);border:1px solid #9a9a9a;border-radius:2px;box-sizing:border-box'></div>
<div class=a style='left:940px;top:647.84px;font-size:12px;line-height:12px;color:#a8a8a8;letter-spacing:-0.2px;'>Удалить</div>
<div class=a style='left:249px;top:327px;width:712px;height:402px;background:#2e2e2e;border-radius:4px 4px 0 0'></div>
<div class=a style='left:250px;top:328px;width:710px;height:5px;background:#5a5a5a;border-radius:3px 3px 0 0'></div>
<div class=a style='left:250px;top:333px;width:710px;height:1px;background:#1a1a1a'></div>
<svg style='left:250px;top:334px' width='710' height='14' shape-rendering='crispEdges'><rect width='710' height='14' fill='url(#stp)'/></svg>
<div class=a style='left:250px;top:347px;width:710px;height:1px;background:#6e6e6e'></div>
<div class=a style='left:250px;top:348px;width:710px;height:5px;background:linear-gradient(#4c4c50,#3c3c40)'></div>
<div class=a style='left:252px;top:353px;width:705px;height:372px;background:#ebebeb'></div>
<div class=a style='left:252px;top:353px;width:1px;height:372px;background:#9a9a9a'></div>
<div class=a style='left:252px;top:353px;width:705px;height:1px;background:#8a8a8a'></div>
<svg style='left:250px;top:328px' width='30' height='26' viewBox='0 0 30 26'>
<ellipse cx='13' cy='13' rx='13' ry='12' fill='#2a2a30'/>
<rect x='4.5' y='6.5' width='13' height='11' fill='#f4faff' stroke='#4a6ab0'/><rect x='4.5' y='6.5' width='13' height='2.5' fill='#4a6ab0'/>
<rect x='9' y='9' width='4' height='8' fill='#50c8c0'/><path d='M5 12 h12 M5 14.5 h12' stroke='#8aa0c0' stroke-width='.8'/>
<circle cx='18' cy='18' r='3.8' fill='#f0a010' stroke='#f8c040' stroke-width='1.8' stroke-dasharray='1.4 1.1'/><circle cx='18' cy='18' r='1.3' fill='#fff0c0'/>
</svg>
<div class=a style='left:432px;top:336.69px;font-size:11px;line-height:11px;color:#f0f0f0;letter-spacing:0.02px;'>Настройка полей таблицы &quot;Продукты по договору&quot; (qdfContractsProducts)</div>
<div class=a style='left:948px;top:334px;width:12px;height:14px;background:linear-gradient(90deg,#3a3a3a,#2a2a2a)'></div>
<svg style='left:909px;top:329px' width='48' height='24' viewBox='0 0 48 24'>
<path d='M1.5 12 q0 -8 9 -8 h13 q5 -4 11 -3 q10 1.5 10 11 q0 10 -10 11 q-6 1 -11 -3 h-13 q-9 0 -9 -8z' fill='#3c3c3c' stroke='#5a5a5a' stroke-width='1'/>
<rect x='4' y='7.5' width='16' height='9' rx='4.5' fill='#3a3a3a' stroke='#7a7a7a' stroke-width='.8'/>
<rect x='5.5' y='8.5' width='13' height='7' rx='3.5' fill='#06204a'/><rect x='7' y='9.8' width='10' height='4.4' rx='2.2' fill='#3aa8f0'/>
<circle cx='34' cy='12' r='8' fill='#444' stroke='#6a6a6a' stroke-width='1'/>
<circle cx='34' cy='12' r='6.3' fill='#06204a'/><circle cx='34' cy='12' r='5' fill='#2a90e8'/><circle cx='33' cy='10.5' r='2.2' fill='#8ad0ff'/>
</svg>
<div class=a style='left:260px;top:366px;width:688px;height:35px;border:1px solid #a8a8a8;box-sizing:border-box'></div>
<div class=a style='left:261px;top:367px;width:686px;height:33px;border:1px solid #ffffff;border-right:none;border-bottom:none;box-sizing:border-box'></div>
<div class=a style='left:260px;top:401px;width:689px;height:1px;background:#ffffff'></div>
<div class=a style='left:948px;top:366px;width:1px;height:36px;background:#ffffff'></div>
<div class=a style='left:270px;top:377.84px;font-size:12px;line-height:12px;color:#8a1010;font-weight:bold;letter-spacing:-0.1px;text-decoration:underline;'>Пользователь:</div>
<div class=a style='left:368px;top:374px;width:175px;height:21px;background:#fff;border:1px solid #8a8a8a;border-right-color:#dcdcdc;border-bottom-color:#dcdcdc;box-sizing:border-box'></div>
<div class=a style='left:372px;top:379.69px;font-size:11px;line-height:11px;color:#000;letter-spacing:-0.05px;'>Старцев Петр Александрович</div>
<div class=a style='left:525px;top:376px;width:17px;height:17px;background:linear-gradient(#e4e4e4,#a8a8a8);border:1px solid #7a7a7a;box-sizing:border-box'></div>
<svg style='left:530px;top:382px' width='7' height='5' viewBox='0 0 7 5'><path d='M1 1 L3.5 4 L6 1' stroke='#444' stroke-width='1.2' fill='none'/></svg>
<svg style='left:559px;top:377px' width='16' height='16' viewBox='0 0 16 16'><path d='M1.5 0.5 h5 l4 4 v7 h-9 z' fill='url(#gDoc)' stroke='#2a6ac0'/><path d='M6.5 0.5 v4 h4' fill='#cfe6fa' stroke='#2a6ac0'/><rect x='3' y='4' width='4' height='1' fill='#4a7ab0'/><rect x='3' y='6' width='4' height='1' fill='#4a7ab0'/><rect x='3' y='8' width='4' height='1' fill='#4a7ab0'/><path d='M6.5 4.5 h6 l4 4 v7 h-10 z' fill='url(#gDoc)' stroke='#2a6ac0'/><path d='M12.5 4.5 v4 h4' fill='#cfe6fa' stroke='#2a6ac0'/><rect x='8' y='10' width='6' height='1' fill='#4a7ab0'/><rect x='8' y='12' width='6' height='1' fill='#4a7ab0'/></svg>
<svg style='left:581px;top:383px' width='6' height='4' viewBox='0 0 6 4'><path d='M0 0 h5 l-2.5 3z' fill='#000'/></svg>
<div class=a style='left:260px;top:411px;width:688px;height:266px;border:1px solid #a8a8a8;box-sizing:border-box'></div>
<div class=a style='left:261px;top:412px;width:686px;height:264px;border:1px solid #ffffff;border-right:none;border-bottom:none;box-sizing:border-box'></div>
<div class=a style='left:260px;top:677px;width:689px;height:1px;background:#ffffff'></div>
<div class=a style='left:948px;top:411px;width:1px;height:267px;background:#ffffff'></div>
<div class=a style='left:270px;top:422.84px;font-size:12px;line-height:12px;color:#000;font-weight:bold;letter-spacing:0.1px;'>Список полей (всего 40):</div>
<div class=a style='left:842px;top:419px;width:16px;height:16px;background:#efefef;border:1px solid #fff;border-right-color:#2a2a2a;border-bottom-color:#2a2a2a;box-sizing:border-box'></div>
<svg style='left:842px;top:419px' width='16' height='16' viewBox='0 0 16 16'><path d='M6 4 h3 v3 h3 v3 h-3 v3 h-3 v-3 h-3 v-3 h3z' fill='#50d050' stroke='#108a10' stroke-width='1'/></svg>
<div class=a style='left:858px;top:419px;width:16px;height:16px;background:#efefef;border:1px solid #fff;border-right-color:#2a2a2a;border-bottom-color:#2a2a2a;box-sizing:border-box'></div>
<svg style='left:858px;top:419px' width='16' height='16' viewBox='0 0 16 16'><path d='M4.5 4.5 L11 11 M11 4.5 L4.5 11' stroke='#a01818' stroke-width='1.6'/></svg>
<div class=a style='left:874px;top:419px;width:16px;height:16px;background:#efefef;border:1px solid #fff;border-right-color:#2a2a2a;border-bottom-color:#2a2a2a;box-sizing:border-box'></div>
<svg style='left:874px;top:419px' width='16' height='16' viewBox='0 0 16 16'><path d='M7.5 3.5 L11.5 8 h-2.5 v4 h-3 v-4 h-2.5z' fill='#000'/></svg>
<div class=a style='left:890px;top:419px;width:16px;height:16px;background:#efefef;border:1px solid #fff;border-right-color:#2a2a2a;border-bottom-color:#2a2a2a;box-sizing:border-box'></div>
<svg style='left:890px;top:419px' width='16' height='16' viewBox='0 0 16 16'><path d='M7.5 12.5 L11.5 8 h-2.5 v-4 h-3 v4 h-2.5z' fill='#000'/></svg>
<div class=a style='left:906px;top:419px;width:16px;height:16px;background:#efefef;border:1px solid #fff;border-right-color:#2a2a2a;border-bottom-color:#2a2a2a;box-sizing:border-box'></div>
<svg style='left:906px;top:419px' width='16' height='16' viewBox='0 0 16 16'><path d='M3.5 5.5 h3 l1 1 h4 v5 h-8z' fill='#b0a020' stroke='#3a3000' stroke-width='.8'/><path d='M3.5 11.5 l2 -3.5 h8 l-2 3.5z' fill='#d8d050' stroke='#3a3000' stroke-width='.8'/></svg>
<div class=a style='left:922px;top:419px;width:16px;height:16px;background:#efefef;border:1px solid #fff;border-right-color:#2a2a2a;border-bottom-color:#2a2a2a;box-sizing:border-box'></div>
<svg style='left:922px;top:419px' width='16' height='16' viewBox='0 0 16 16'><rect x='3.5' y='4' width='9' height='9' fill='#a09020' stroke='#2a2a00' stroke-width='1.2'/><rect x='5.5' y='4.5' width='5' height='3' fill='#e8e0a0'/><rect x='5.5' y='9.5' width='5' height='3' fill='#2a2a00'/></svg>
<div class=a style='left:270px;top:440px;width:667px;height:153px;background:#ebebeb'></div>
<div class=a style='left:270px;top:440px;width:667px;height:1px;background:#1e1e1e'></div>
<div class=a style='left:270px;top:440px;width:1px;height:153px;background:#1e1e1e'></div>
<div class=a style='left:270px;top:592px;width:667px;height:1px;background:#6a6a6a'></div>
<div class=a style='left:270px;top:593px;width:667px;height:1px;background:#e8e8e8'></div>
<div class=a style='left:271px;top:441px;width:645px;height:16px;background:linear-gradient(#f8f8f8,#e4e4e4 60%,#d4d4d4)'></div>
<div class=a style='left:271px;top:457px;width:645px;height:1px;background:#a8a8a8'></div>
<div class=a style='left:290px;top:441px;width:1px;height:16px;background:#b0b0b0'></div>
<div class=a style='left:291px;top:441px;width:1px;height:16px;background:#fafafa'></div>
<div class=a style='left:338px;top:441px;width:1px;height:16px;background:#b0b0b0'></div>
<div class=a style='left:339px;top:441px;width:1px;height:16px;background:#fafafa'></div>
<div class=a style='left:290px;width:47px;text-align:right;top:443.69px;font-size:11px;line-height:11px;color:#000;'>Позиция</div>
<div class=a style='left:434px;top:441px;width:1px;height:16px;background:#b0b0b0'></div>
<div class=a style='left:435px;top:441px;width:1px;height:16px;background:#fafafa'></div>
<div class=a style='left:340px;top:443.69px;font-size:11px;line-height:11px;color:#000;'>Внутреннее имя</div>
<div class=a style='left:596px;top:441px;width:1px;height:16px;background:#b0b0b0'></div>
<div class=a style='left:597px;top:441px;width:1px;height:16px;background:#fafafa'></div>
<div class=a style='left:436px;top:443.69px;font-size:11px;line-height:11px;color:#000;'>Наименование</div>
<div class=a style='left:644px;top:441px;width:1px;height:16px;background:#b0b0b0'></div>
<div class=a style='left:645px;top:441px;width:1px;height:16px;background:#fafafa'></div>
<div class=a style='left:596px;width:47px;text-align:right;top:443.69px;font-size:11px;line-height:11px;color:#000;'>Ширина</div>
<div class=a style='left:711px;top:441px;width:1px;height:16px;background:#b0b0b0'></div>
<div class=a style='left:712px;top:441px;width:1px;height:16px;background:#fafafa'></div>
<div class=a style='left:646px;top:443.69px;font-size:11px;line-height:11px;color:#000;'>Показывать</div>
<div class=a style='left:780px;top:441px;width:1px;height:16px;background:#b0b0b0'></div>
<div class=a style='left:781px;top:441px;width:1px;height:16px;background:#fafafa'></div>
<div class=a style='left:713px;top:443.69px;font-size:11px;line-height:11px;color:#000;'>Объединять</div>
<div class=a style='left:843px;top:441px;width:1px;height:16px;background:#b0b0b0'></div>
<div class=a style='left:844px;top:441px;width:1px;height:16px;background:#fafafa'></div>
<div class=a style='left:782px;top:443.69px;font-size:11px;line-height:11px;color:#000;'>Цвет фона</div>
<div class=a style='left:916px;top:441px;width:1px;height:16px;background:#b0b0b0'></div>
<div class=a style='left:917px;top:441px;width:1px;height:16px;background:#fafafa'></div>
<div class=a style='left:845px;top:443.69px;font-size:11px;line-height:11px;color:#000;'>Цвет шрифта</div>
<div class=a style='left:271px;top:458px;width:19px;height:14px;background:linear-gradient(#e8e8e8,#dcdcdc 80%,#cfcfcf);border-top:1px solid #fff;border-left:1px solid #fff;border-right:1px solid #f0f0f8;box-sizing:border-box'></div>
<div class=a style='left:271px;top:471px;width:19px;height:1px;background:#b8b8b8'></div>
<div class=a style='left:271px;top:472px;width:19px;height:1px;background:#808080'></div>
<div class=a style='left:291px;top:458px;width:625px;height:14px;background:#ffffff'></div>
<div class=a style='left:339px;top:458px;width:257px;height:14px;background:#f2f2f2'></div>
<div class=a style='left:291px;top:472px;width:625px;height:1px;background:#c8c8c8'></div>
<div class=a style='left:338px;top:458px;width:1px;height:15px;background:#c8c8c8'></div>
<div class=a style='left:434px;top:458px;width:1px;height:15px;background:#c8c8c8'></div>
<div class=a style='left:596px;top:458px;width:1px;height:15px;background:#c8c8c8'></div>
<div class=a style='left:644px;top:458px;width:1px;height:15px;background:#c8c8c8'></div>
<div class=a style='left:711px;top:458px;width:1px;height:15px;background:#c8c8c8'></div>
<div class=a style='left:780px;top:458px;width:1px;height:15px;background:#c8c8c8'></div>
<div class=a style='left:843px;top:458px;width:1px;height:15px;background:#c8c8c8'></div>
<div class=a style='left:916px;top:458px;width:1px;height:15px;background:#c8c8c8'></div>
<div class=a style='left:297px;width:40px;text-align:right;top:459.44px;font-size:12px;line-height:12px;color:#000;'>1</div>
<div class=a style='left:341px;top:460.29px;font-size:11px;line-height:11px;color:#909090;letter-spacing:-0.15px;'>ID</div>
<div class=a style='left:437px;top:460.29px;font-size:11px;line-height:11px;color:#909090;letter-spacing:-0.15px;'>ID</div>
<div class=a style='left:603px;width:40px;text-align:right;top:459.44px;font-size:12px;line-height:12px;color:#000;letter-spacing:-0.2px;'>390</div>
<div class=a style='left:672px;top:459px;width:12px;height:12px;background:linear-gradient(135deg,#ffffff,#c0c0c0);border:1px solid #505050;box-sizing:border-box'></div>
<div class=a style='left:675px;top:462px;width:5px;height:5px;background:linear-gradient(135deg,#606060,#000)'></div>
<div class=a style='left:740px;top:459px;width:12px;height:12px;background:linear-gradient(135deg,#e8e8e8,#b8b8b8);border:1px solid #606060;box-sizing:border-box'></div>
<div class=a style='left:271px;top:473px;width:19px;height:14px;background:linear-gradient(#e8e8e8,#dcdcdc 80%,#cfcfcf);border-top:1px solid #fff;border-left:1px solid #fff;border-right:1px solid #f0f0f8;box-sizing:border-box'></div>
<div class=a style='left:271px;top:486px;width:19px;height:1px;background:#b8b8b8'></div>
<div class=a style='left:271px;top:487px;width:19px;height:1px;background:#808080'></div>
<div class=a style='left:291px;top:473px;width:625px;height:14px;background:#ffffff'></div>
<div class=a style='left:339px;top:473px;width:257px;height:14px;background:#f2f2f2'></div>
<div class=a style='left:291px;top:487px;width:625px;height:1px;background:#c8c8c8'></div>
<div class=a style='left:338px;top:473px;width:1px;height:15px;background:#c8c8c8'></div>
<div class=a style='left:434px;top:473px;width:1px;height:15px;background:#c8c8c8'></div>
<div class=a style='left:596px;top:473px;width:1px;height:15px;background:#c8c8c8'></div>
<div class=a style='left:644px;top:473px;width:1px;height:15px;background:#c8c8c8'></div>
<div class=a style='left:711px;top:473px;width:1px;height:15px;background:#c8c8c8'></div>
<div class=a style='left:780px;top:473px;width:1px;height:15px;background:#c8c8c8'></div>
<div class=a style='left:843px;top:473px;width:1px;height:15px;background:#c8c8c8'></div>
<div class=a style='left:916px;top:473px;width:1px;height:15px;background:#c8c8c8'></div>
<div class=a style='left:297px;width:40px;text-align:right;top:474.44px;font-size:12px;line-height:12px;color:#000;'>2</div>
<div class=a style='left:341px;top:475.29px;font-size:11px;line-height:11px;color:#909090;letter-spacing:-0.15px;'>Ordinal</div>
<div class=a style='left:437px;top:475.29px;font-size:11px;line-height:11px;color:#909090;letter-spacing:-0.15px;'>Зав. №</div>
<div class=a style='left:603px;width:40px;text-align:right;top:474.44px;font-size:12px;line-height:12px;color:#000;letter-spacing:-0.2px;'>1545</div>
<div class=a style='left:672px;top:474px;width:12px;height:12px;background:linear-gradient(135deg,#ffffff,#c0c0c0);border:1px solid #505050;box-sizing:border-box'></div>
<div class=a style='left:675px;top:477px;width:5px;height:5px;background:linear-gradient(135deg,#606060,#000)'></div>
<div class=a style='left:740px;top:474px;width:12px;height:12px;background:linear-gradient(135deg,#e8e8e8,#b8b8b8);border:1px solid #606060;box-sizing:border-box'></div>
<div class=a style='left:271px;top:488px;width:19px;height:14px;background:linear-gradient(#e8e8e8,#dcdcdc 80%,#cfcfcf);border-top:1px solid #fff;border-left:1px solid #fff;border-right:1px solid #f0f0f8;box-sizing:border-box'></div>
<div class=a style='left:271px;top:501px;width:19px;height:1px;background:#b8b8b8'></div>
<div class=a style='left:271px;top:502px;width:19px;height:1px;background:#808080'></div>
<div class=a style='left:291px;top:488px;width:625px;height:14px;background:#ffffff'></div>
<div class=a style='left:339px;top:488px;width:257px;height:14px;background:#f2f2f2'></div>
<div class=a style='left:291px;top:502px;width:625px;height:1px;background:#c8c8c8'></div>
<div class=a style='left:338px;top:488px;width:1px;height:15px;background:#c8c8c8'></div>
<div class=a style='left:434px;top:488px;width:1px;height:15px;background:#c8c8c8'></div>
<div class=a style='left:596px;top:488px;width:1px;height:15px;background:#c8c8c8'></div>
<div class=a style='left:644px;top:488px;width:1px;height:15px;background:#c8c8c8'></div>
<div class=a style='left:711px;top:488px;width:1px;height:15px;background:#c8c8c8'></div>
<div class=a style='left:780px;top:488px;width:1px;height:15px;background:#c8c8c8'></div>
<div class=a style='left:843px;top:488px;width:1px;height:15px;background:#c8c8c8'></div>
<div class=a style='left:916px;top:488px;width:1px;height:15px;background:#c8c8c8'></div>
<div class=a style='left:297px;width:40px;text-align:right;top:489.44px;font-size:12px;line-height:12px;color:#000;'>3</div>
<div class=a style='left:341px;top:490.29px;font-size:11px;line-height:11px;color:#909090;letter-spacing:-0.15px;'>ProductName</div>
<div class=a style='left:437px;top:490.29px;font-size:11px;line-height:11px;color:#909090;letter-spacing:-0.15px;'>Продукт</div>
<div class=a style='left:603px;width:40px;text-align:right;top:489.44px;font-size:12px;line-height:12px;color:#000;letter-spacing:-0.2px;'>1545</div>
<div class=a style='left:672px;top:489px;width:12px;height:12px;background:linear-gradient(135deg,#ffffff,#c0c0c0);border:1px solid #505050;box-sizing:border-box'></div>
<div class=a style='left:675px;top:492px;width:5px;height:5px;background:linear-gradient(135deg,#606060,#000)'></div>
<div class=a style='left:740px;top:489px;width:12px;height:12px;background:linear-gradient(135deg,#e8e8e8,#b8b8b8);border:1px solid #606060;box-sizing:border-box'></div>
<div class=a style='left:271px;top:503px;width:19px;height:14px;background:linear-gradient(#e8e8e8,#dcdcdc 80%,#cfcfcf);border-top:1px solid #fff;border-left:1px solid #fff;border-right:1px solid #f0f0f8;box-sizing:border-box'></div>
<div class=a style='left:271px;top:516px;width:19px;height:1px;background:#b8b8b8'></div>
<div class=a style='left:271px;top:517px;width:19px;height:1px;background:#808080'></div>
<div class=a style='left:291px;top:503px;width:625px;height:14px;background:#ffffff'></div>
<div class=a style='left:339px;top:503px;width:257px;height:14px;background:#f2f2f2'></div>
<div class=a style='left:291px;top:517px;width:625px;height:1px;background:#c8c8c8'></div>
<div class=a style='left:338px;top:503px;width:1px;height:15px;background:#c8c8c8'></div>
<div class=a style='left:434px;top:503px;width:1px;height:15px;background:#c8c8c8'></div>
<div class=a style='left:596px;top:503px;width:1px;height:15px;background:#c8c8c8'></div>
<div class=a style='left:644px;top:503px;width:1px;height:15px;background:#c8c8c8'></div>
<div class=a style='left:711px;top:503px;width:1px;height:15px;background:#c8c8c8'></div>
<div class=a style='left:780px;top:503px;width:1px;height:15px;background:#c8c8c8'></div>
<div class=a style='left:843px;top:503px;width:1px;height:15px;background:#c8c8c8'></div>
<div class=a style='left:916px;top:503px;width:1px;height:15px;background:#c8c8c8'></div>
<div class=a style='left:297px;width:40px;text-align:right;top:504.44px;font-size:12px;line-height:12px;color:#000;'>4</div>
<div class=a style='left:341px;top:505.29px;font-size:11px;line-height:11px;color:#909090;letter-spacing:-0.15px;'>ProductPrice</div>
<div class=a style='left:437px;top:505.29px;font-size:11px;line-height:11px;color:#909090;letter-spacing:-0.15px;'>Цена</div>
<div class=a style='left:603px;width:40px;text-align:right;top:504.44px;font-size:12px;line-height:12px;color:#000;letter-spacing:-0.2px;'>1545</div>
<div class=a style='left:672px;top:504px;width:12px;height:12px;background:linear-gradient(135deg,#ffffff,#c0c0c0);border:1px solid #505050;box-sizing:border-box'></div>
<div class=a style='left:675px;top:507px;width:5px;height:5px;background:linear-gradient(135deg,#606060,#000)'></div>
<div class=a style='left:740px;top:504px;width:12px;height:12px;background:linear-gradient(135deg,#e8e8e8,#b8b8b8);border:1px solid #606060;box-sizing:border-box'></div>
<div class=a style='left:271px;top:518px;width:19px;height:14px;background:linear-gradient(#e8e8e8,#dcdcdc 80%,#cfcfcf);border-top:1px solid #fff;border-left:1px solid #fff;border-right:1px solid #f0f0f8;box-sizing:border-box'></div>
<div class=a style='left:271px;top:531px;width:19px;height:1px;background:#b8b8b8'></div>
<div class=a style='left:271px;top:532px;width:19px;height:1px;background:#808080'></div>
<div class=a style='left:291px;top:518px;width:625px;height:14px;background:#ffffff'></div>
<div class=a style='left:339px;top:518px;width:257px;height:14px;background:#f2f2f2'></div>
<div class=a style='left:291px;top:532px;width:625px;height:1px;background:#c8c8c8'></div>
<div class=a style='left:338px;top:518px;width:1px;height:15px;background:#c8c8c8'></div>
<div class=a style='left:434px;top:518px;width:1px;height:15px;background:#c8c8c8'></div>
<div class=a style='left:596px;top:518px;width:1px;height:15px;background:#c8c8c8'></div>
<div class=a style='left:644px;top:518px;width:1px;height:15px;background:#c8c8c8'></div>
<div class=a style='left:711px;top:518px;width:1px;height:15px;background:#c8c8c8'></div>
<div class=a style='left:780px;top:518px;width:1px;height:15px;background:#c8c8c8'></div>
<div class=a style='left:843px;top:518px;width:1px;height:15px;background:#c8c8c8'></div>
<div class=a style='left:916px;top:518px;width:1px;height:15px;background:#c8c8c8'></div>
<div class=a style='left:297px;width:40px;text-align:right;top:519.44px;font-size:12px;line-height:12px;color:#000;'>5</div>
<div class=a style='left:341px;top:520.29px;font-size:11px;line-height:11px;color:#909090;letter-spacing:-0.15px;'>FP</div>
<div class=a style='left:437px;top:520.29px;font-size:11px;line-height:11px;color:#909090;letter-spacing:-0.15px;'>ФП</div>
<div class=a style='left:603px;width:40px;text-align:right;top:519.44px;font-size:12px;line-height:12px;color:#000;letter-spacing:-0.2px;'>1545</div>
<div class=a style='left:672px;top:519px;width:12px;height:12px;background:linear-gradient(135deg,#ffffff,#c0c0c0);border:1px solid #505050;box-sizing:border-box'></div>
<div class=a style='left:675px;top:522px;width:5px;height:5px;background:linear-gradient(135deg,#606060,#000)'></div>
<div class=a style='left:740px;top:519px;width:12px;height:12px;background:linear-gradient(135deg,#e8e8e8,#b8b8b8);border:1px solid #606060;box-sizing:border-box'></div>
<div class=a style='left:271px;top:533px;width:19px;height:14px;background:linear-gradient(#e8e8e8,#dcdcdc 80%,#cfcfcf);border-top:1px solid #fff;border-left:1px solid #fff;border-right:1px solid #f0f0f8;box-sizing:border-box'></div>
<div class=a style='left:271px;top:546px;width:19px;height:1px;background:#b8b8b8'></div>
<div class=a style='left:271px;top:547px;width:19px;height:1px;background:#808080'></div>
<div class=a style='left:291px;top:533px;width:625px;height:14px;background:#ffffff'></div>
<div class=a style='left:339px;top:533px;width:257px;height:14px;background:#f2f2f2'></div>
<div class=a style='left:291px;top:547px;width:625px;height:1px;background:#c8c8c8'></div>
<div class=a style='left:338px;top:533px;width:1px;height:15px;background:#c8c8c8'></div>
<div class=a style='left:434px;top:533px;width:1px;height:15px;background:#c8c8c8'></div>
<div class=a style='left:596px;top:533px;width:1px;height:15px;background:#c8c8c8'></div>
<div class=a style='left:644px;top:533px;width:1px;height:15px;background:#c8c8c8'></div>
<div class=a style='left:711px;top:533px;width:1px;height:15px;background:#c8c8c8'></div>
<div class=a style='left:780px;top:533px;width:1px;height:15px;background:#c8c8c8'></div>
<div class=a style='left:843px;top:533px;width:1px;height:15px;background:#c8c8c8'></div>
<div class=a style='left:916px;top:533px;width:1px;height:15px;background:#c8c8c8'></div>
<div class=a style='left:297px;width:40px;text-align:right;top:534.44px;font-size:12px;line-height:12px;color:#000;'>6</div>
<div class=a style='left:341px;top:535.29px;font-size:11px;line-height:11px;color:#909090;letter-spacing:-0.15px;'>Nsmen</div>
<div class=a style='left:437px;top:535.29px;font-size:11px;line-height:11px;color:#909090;letter-spacing:-0.15px;'>Нсмены</div>
<div class=a style='left:603px;width:40px;text-align:right;top:534.44px;font-size:12px;line-height:12px;color:#000;letter-spacing:-0.2px;'>1545</div>
<div class=a style='left:672px;top:534px;width:12px;height:12px;background:linear-gradient(135deg,#ffffff,#c0c0c0);border:1px solid #505050;box-sizing:border-box'></div>
<div class=a style='left:675px;top:537px;width:5px;height:5px;background:linear-gradient(135deg,#606060,#000)'></div>
<div class=a style='left:740px;top:534px;width:12px;height:12px;background:linear-gradient(135deg,#e8e8e8,#b8b8b8);border:1px solid #606060;box-sizing:border-box'></div>
<div class=a style='left:271px;top:548px;width:19px;height:14px;background:linear-gradient(#e8e8e8,#dcdcdc 80%,#cfcfcf);border-top:1px solid #fff;border-left:1px solid #fff;border-right:1px solid #f0f0f8;box-sizing:border-box'></div>
<div class=a style='left:271px;top:561px;width:19px;height:1px;background:#b8b8b8'></div>
<div class=a style='left:271px;top:562px;width:19px;height:1px;background:#808080'></div>
<div class=a style='left:291px;top:548px;width:625px;height:14px;background:#c8e0f8'></div>
<div class=a style='left:291px;top:562px;width:625px;height:1px;background:#c8c8c8'></div>
<div class=a style='left:338px;top:548px;width:1px;height:15px;background:#c8c8c8'></div>
<div class=a style='left:434px;top:548px;width:1px;height:15px;background:#c8c8c8'></div>
<div class=a style='left:596px;top:548px;width:1px;height:15px;background:#c8c8c8'></div>
<div class=a style='left:644px;top:548px;width:1px;height:15px;background:#c8c8c8'></div>
<div class=a style='left:711px;top:548px;width:1px;height:15px;background:#c8c8c8'></div>
<div class=a style='left:780px;top:548px;width:1px;height:15px;background:#c8c8c8'></div>
<div class=a style='left:843px;top:548px;width:1px;height:15px;background:#c8c8c8'></div>
<div class=a style='left:916px;top:548px;width:1px;height:15px;background:#c8c8c8'></div>
<div class=a style='left:297px;width:40px;text-align:right;top:549.44px;font-size:12px;line-height:12px;color:#000;'>7</div>
<div class=a style='left:341px;top:550.29px;font-size:11px;line-height:11px;color:#000;letter-spacing:-0.15px;'>Field1Calc</div>
<div class=a style='left:437px;top:550.29px;font-size:11px;line-height:11px;color:#000;letter-spacing:-0.15px;'>Новое поле</div>
<div class=a style='left:603px;width:40px;text-align:right;top:549.44px;font-size:12px;line-height:12px;color:#000;letter-spacing:-0.2px;'>1545</div>
<div class=a style='left:672px;top:549px;width:12px;height:12px;background:linear-gradient(135deg,#ffffff,#c0c0c0);border:1px solid #505050;box-sizing:border-box'></div>
<div class=a style='left:675px;top:552px;width:5px;height:5px;background:linear-gradient(135deg,#606060,#000)'></div>
<div class=a style='left:740px;top:549px;width:12px;height:12px;background:linear-gradient(135deg,#e8e8e8,#b8b8b8);border:1px solid #606060;box-sizing:border-box'></div>
<svg style='left:279px;top:551px' width='6' height='9' viewBox='0 0 6 9'><path d='M0 0 L5.5 4.5 L0 9z' fill='#000'/></svg>
<div class=a style='left:271px;top:563px;width:19px;height:14px;background:linear-gradient(#e8e8e8,#dcdcdc 80%,#cfcfcf);border-top:1px solid #fff;border-left:1px solid #fff;border-right:1px solid #f0f0f8;box-sizing:border-box'></div>
<div class=a style='left:271px;top:576px;width:19px;height:1px;background:#b8b8b8'></div>
<div class=a style='left:271px;top:577px;width:19px;height:1px;background:#808080'></div>
<div class=a style='left:291px;top:563px;width:625px;height:14px;background:#ffffff'></div>
<div class=a style='left:339px;top:563px;width:257px;height:14px;background:#f2f2f2'></div>
<div class=a style='left:291px;top:577px;width:625px;height:1px;background:#c8c8c8'></div>
<div class=a style='left:338px;top:563px;width:1px;height:15px;background:#c8c8c8'></div>
<div class=a style='left:434px;top:563px;width:1px;height:15px;background:#c8c8c8'></div>
<div class=a style='left:596px;top:563px;width:1px;height:15px;background:#c8c8c8'></div>
<div class=a style='left:644px;top:563px;width:1px;height:15px;background:#c8c8c8'></div>
<div class=a style='left:711px;top:563px;width:1px;height:15px;background:#c8c8c8'></div>
<div class=a style='left:780px;top:563px;width:1px;height:15px;background:#c8c8c8'></div>
<div class=a style='left:843px;top:563px;width:1px;height:15px;background:#c8c8c8'></div>
<div class=a style='left:916px;top:563px;width:1px;height:15px;background:#c8c8c8'></div>
<div class=a style='left:297px;width:40px;text-align:right;top:564.44px;font-size:12px;line-height:12px;color:#000;'>8</div>
<div class=a style='left:341px;top:565.29px;font-size:11px;line-height:11px;color:#909090;letter-spacing:-0.15px;'>ProductDescription</div>
<div class=a style='left:437px;top:565.29px;font-size:11px;line-height:11px;color:#909090;letter-spacing:-0.15px;'>Место установки</div>
<div class=a style='left:603px;width:40px;text-align:right;top:564.44px;font-size:12px;line-height:12px;color:#000;letter-spacing:-0.2px;'>1545</div>
<div class=a style='left:672px;top:564px;width:12px;height:12px;background:linear-gradient(135deg,#ffffff,#c0c0c0);border:1px solid #505050;box-sizing:border-box'></div>
<div class=a style='left:675px;top:567px;width:5px;height:5px;background:linear-gradient(135deg,#606060,#000)'></div>
<div class=a style='left:740px;top:564px;width:12px;height:12px;background:linear-gradient(135deg,#e8e8e8,#b8b8b8);border:1px solid #606060;box-sizing:border-box'></div>
<div class=a style='left:271px;top:578px;width:19px;height:14px;background:linear-gradient(#e8e8e8,#dcdcdc 80%,#cfcfcf);border-top:1px solid #fff;border-left:1px solid #fff;border-right:1px solid #f0f0f8;box-sizing:border-box'></div>
<div class=a style='left:271px;top:591px;width:19px;height:1px;background:#b8b8b8'></div>
<div class=a style='left:271px;top:592px;width:19px;height:1px;background:#808080'></div>
<div class=a style='left:291px;top:578px;width:625px;height:14px;background:#ffffff'></div>
<div class=a style='left:339px;top:578px;width:257px;height:14px;background:#f2f2f2'></div>
<div class=a style='left:291px;top:592px;width:625px;height:1px;background:#c8c8c8'></div>
<div class=a style='left:338px;top:578px;width:1px;height:15px;background:#c8c8c8'></div>
<div class=a style='left:434px;top:578px;width:1px;height:15px;background:#c8c8c8'></div>
<div class=a style='left:596px;top:578px;width:1px;height:15px;background:#c8c8c8'></div>
<div class=a style='left:644px;top:578px;width:1px;height:15px;background:#c8c8c8'></div>
<div class=a style='left:711px;top:578px;width:1px;height:15px;background:#c8c8c8'></div>
<div class=a style='left:780px;top:578px;width:1px;height:15px;background:#c8c8c8'></div>
<div class=a style='left:843px;top:578px;width:1px;height:15px;background:#c8c8c8'></div>
<div class=a style='left:916px;top:578px;width:1px;height:15px;background:#c8c8c8'></div>
<div class=a style='left:297px;width:40px;text-align:right;top:579.44px;font-size:12px;line-height:12px;color:#000;'>9</div>
<div class=a style='left:341px;top:580.29px;font-size:11px;line-height:11px;color:#909090;letter-spacing:-0.15px;'>Vers</div>
<div class=a style='left:437px;top:580.29px;font-size:11px;line-height:11px;color:#909090;letter-spacing:-0.15px;'>Vers</div>
<div class=a style='left:603px;width:40px;text-align:right;top:579.44px;font-size:12px;line-height:12px;color:#000;letter-spacing:-0.2px;'>1545</div>
<div class=a style='left:672px;top:579px;width:12px;height:12px;background:linear-gradient(135deg,#ffffff,#c0c0c0);border:1px solid #505050;box-sizing:border-box'></div>
<div class=a style='left:675px;top:582px;width:5px;height:5px;background:linear-gradient(135deg,#606060,#000)'></div>
<div class=a style='left:740px;top:579px;width:12px;height:12px;background:linear-gradient(135deg,#e8e8e8,#b8b8b8);border:1px solid #606060;box-sizing:border-box'></div>
<div class=a style='left:916px;top:441px;width:21px;height:151px;background:#ececec'></div>
<div class=a style='left:919px;top:441px;width:18px;height:151px;background:linear-gradient(90deg,#f4f4f8,#dcdcdc);border:1px solid #9a9a9a;box-sizing:border-box'></div>
<div class=a style='left:922px;top:444px;width:13px;height:12px;background:linear-gradient(#fafafa,#d0d0d0);border:1px solid #6a6a6a;box-sizing:border-box'></div>
<svg style='left:925px;top:447px' width='7' height='6' viewBox='0 0 7 6'><path d='M1 4.5 L3.5 2 L6 4.5' stroke='#333' stroke-width='1.2' fill='none'/></svg>
<div class=a style='left:921px;top:459px;width:15px;height:27px;background:linear-gradient(90deg,#fafafa,#c4c4c4);border:1px solid #7a7a7a;border-radius:1px;box-sizing:border-box'></div>
<svg style='left:924px;top:466px' width='10' height='14' viewBox='0 0 10 14'><path d='M1 3 h8 M1 6 h8 M1 9 h8' stroke='#666' stroke-width='1'/></svg>
<div class=a style='left:925px;top:487px;width:6px;height:88px;background:#1e1e1e'></div>
<div class=a style='left:927px;top:487px;width:1px;height:88px;background:#5a5a5a'></div>
<div class=a style='left:922px;top:576px;width:13px;height:13px;background:linear-gradient(#fafafa,#d0d0d0);border:1px solid #6a6a6a;box-sizing:border-box'></div>
<svg style='left:925px;top:580px' width='7' height='6' viewBox='0 0 7 6'><path d='M1 1.5 L3.5 4 L6 1.5' stroke='#333' stroke-width='1.2' fill='none'/></svg>
<div class=a style='left:937px;top:440px;width:1px;height:153px;background:#e8e8e8'></div>
<div class=a style='left:269px;top:605px;width:13px;height:13px;background:linear-gradient(135deg,#ffffff,#c8c8c8);border:1px solid #7a7a7a;box-sizing:border-box'></div>
<div class=a style='left:273px;top:609px;width:5px;height:5px;background:#222'></div>
<div class=a style='left:286px;top:606.69px;font-size:11px;line-height:11px;color:#000;letter-spacing:0.12px;'>Показывать список полей в контекстном меню</div>
<div class=a style='left:269px;top:621px;width:13px;height:13px;background:linear-gradient(135deg,#ffffff,#c8c8c8);border:1px solid #7a7a7a;box-sizing:border-box'></div>
<div class=a style='left:273px;top:625px;width:5px;height:5px;background:#222'></div>
<div class=a style='left:286px;top:622.69px;font-size:11px;line-height:11px;color:#000;letter-spacing:0.12px;'>Разрешить менять ширину полей</div>
<div class=a style='left:269px;top:638px;width:13px;height:13px;background:linear-gradient(135deg,#ffffff,#c8c8c8);border:1px solid #7a7a7a;box-sizing:border-box'></div>
<div class=a style='left:273px;top:642px;width:5px;height:5px;background:#222'></div>
<div class=a style='left:286px;top:639.69px;font-size:11px;line-height:11px;color:#000;letter-spacing:0.12px;'>Разрешить сортировку таблицы по клику на заголовках</div>
<div class=a style='left:269px;top:654px;width:13px;height:13px;background:linear-gradient(135deg,#ffffff,#c8c8c8);border:1px solid #7a7a7a;box-sizing:border-box'></div>
<div class=a style='left:273px;top:658px;width:5px;height:5px;background:#222'></div>
<div class=a style='left:286px;top:655.69px;font-size:11px;line-height:11px;color:#000;letter-spacing:0.12px;'>Разрешить менять позиции полей перетаскиванием</div>
<div class=a style='left:673px;top:604px;width:13px;height:13px;background:linear-gradient(135deg,#f0f0f0,#b8b8b8);border:1px solid #7a7a7a;box-sizing:border-box'></div>
<div class=a style='left:689px;top:605.69px;font-size:11px;line-height:11px;color:#000;letter-spacing:0.05px;'>Панель справа</div>
<div class=a style='left:788px;top:604px;width:13px;height:13px;background:linear-gradient(135deg,#f8f8f8,#e0e0e0);border:1px solid #c0c0c0;box-sizing:border-box'></div>
<div class=a style='left:804px;top:605.69px;font-size:11px;line-height:11px;color:#b0b0b0;'>Календарь</div>
<div class=a style='left:893px;top:602px;width:16px;height:16px;background:#ebebeb;border:1px solid #fff;border-right-color:#8a8a8a;border-bottom-color:#8a8a8a;box-sizing:border-box'></div>
<svg style='left:893px;top:602px' width='16' height='16' viewBox='0 0 16 16'><path d='M5.5 3.5 h4 v3 h3 v3 h-3 v3 h-4 v-3 h-3 v-3 h3z' fill='none' stroke='#a0a0a0' stroke-width='.9'/></svg>
<div class=a style='left:909px;top:602px;width:16px;height:16px;background:#ebebeb;border:1px solid #fff;border-right-color:#8a8a8a;border-bottom-color:#8a8a8a;box-sizing:border-box'></div>
<svg style='left:909px;top:602px' width='16' height='16' viewBox='0 0 16 16'><path d='M4 12 L11 3 L12.5 4.5 L5.5 13z' fill='none' stroke='#a0a0a0' stroke-width='.9'/></svg>
<div class=a style='left:924px;top:602px;width:16px;height:16px;background:#ebebeb;border:1px solid #fff;border-right-color:#8a8a8a;border-bottom-color:#8a8a8a;box-sizing:border-box'></div>
<svg style='left:924px;top:602px' width='16' height='16' viewBox='0 0 16 16'><path d='M4 4 L12 12 M12 4 L4 12' stroke='#a0a0a0' stroke-width='1.2'/></svg>
<div class=a style='left:673px;top:620px;width:268px;height:49px;background:#fff;border:1px solid #a8a8a8;border-right-color:#e8e8e8;border-bottom-color:#e8e8e8;box-sizing:border-box'></div>
<div class=a style='left:677px;top:624px;width:12px;height:12px;background:#f4f4f4;border:1px solid #c8c8c8;box-sizing:border-box'></div>
<div class=a style='left:692px;top:624.69px;font-size:11px;line-height:11px;color:#b0b0b0;'>ID</div>
<div class=a style='left:677px;top:639px;width:12px;height:12px;background:#f4f4f4;border:1px solid #c8c8c8;box-sizing:border-box'></div>
<div class=a style='left:692px;top:639.69px;font-size:11px;line-height:11px;color:#b0b0b0;'>Зав. №</div>
<div class=a style='left:677px;top:654px;width:12px;height:12px;background:#f4f4f4;border:1px solid #c8c8c8;box-sizing:border-box'></div>
<div class=a style='left:692px;top:654.69px;font-size:11px;line-height:11px;color:#b0b0b0;'>Продукт</div>
<div class=a style='left:922px;top:622px;width:17px;height:46px;background:#ececec;border:1px solid #8a8a8a;border-right-color:#fff;border-bottom-color:#fff;box-sizing:border-box'></div>
<div class=a style='left:924px;top:624px;width:13px;height:12px;background:linear-gradient(#fafafa,#d0d0d0);border:1px solid #5a5a5a;box-sizing:border-box'></div>
<svg style='left:927px;top:627px' width='7' height='5' viewBox='0 0 7 5'><path d='M1 4 L3.5 1.5 L6 4' stroke='#333' stroke-width='1.2' fill='none'/></svg>
<div class=a style='left:924px;top:638px;width:13px;height:8px;background:linear-gradient(90deg,#fafafa,#c8c8c8);border:1px solid #5a5a5a;box-sizing:border-box'></div>
<div class=a style='left:927px;top:647px;width:3px;height:4px;background:#222'></div>
<div class=a style='left:930px;top:647px;width:3px;height:4px;background:#222'></div>
<div class=a style='left:924px;top:654px;width:13px;height:12px;background:linear-gradient(#fafafa,#d0d0d0);border:1px solid #5a5a5a;box-sizing:border-box'></div>
<svg style='left:927px;top:658px' width='7' height='5' viewBox='0 0 7 5'><path d='M1 1 L3.5 3.5 L6 1' stroke='#333' stroke-width='1.2' fill='none'/></svg>
<div class=a style='left:260px;top:685.69px;font-size:11px;line-height:11px;color:#2050a8;text-decoration:underline;'>Условная видимость &gt;&gt;</div>
<div class=a style='left:715px;top:691px;width:72px;height:21px;background:linear-gradient(#ffffff,#e6e6e6 40%,#b4b4b4);border:1px solid #4a8ad8;border-radius:2px;box-sizing:border-box'></div>
<div class=a style='left:715px;width:72px;text-align:center;top:696.84px;font-size:12px;line-height:12px;color:#000;letter-spacing:-0.4px;'>OK</div>
<div class=a style='left:795px;top:691px;width:72px;height:21px;background:linear-gradient(#ffffff,#e6e6e6 40%,#b4b4b4);border:1px solid #7a7a7a;border-radius:2px;box-sizing:border-box'></div>
<div class=a style='left:795px;width:72px;text-align:center;top:696.84px;font-size:12px;line-height:12px;color:#000;letter-spacing:-0.4px;'>Отмена</div>
<div class=a style='left:875px;top:691px;width:72px;height:21px;background:linear-gradient(#ffffff,#e6e6e6 40%,#b4b4b4);border:1px solid #7a7a7a;border-radius:2px;box-sizing:border-box'></div>
<div class=a style='left:875px;width:72px;text-align:center;top:696.84px;font-size:12px;line-height:12px;color:#000;letter-spacing:-0.4px;'>Применить</div>
<svg style='left:944px;top:712px' width='12' height='12' viewBox='0 0 12 12'><path d='M11 4 L4 11 M11 8 L8 11' stroke='#8a8a8a' stroke-width='1'/><path d='M11 5 L5 11 M11 9 L9 11' stroke='#fff' stroke-width='1'/></svg>
</body></html>
